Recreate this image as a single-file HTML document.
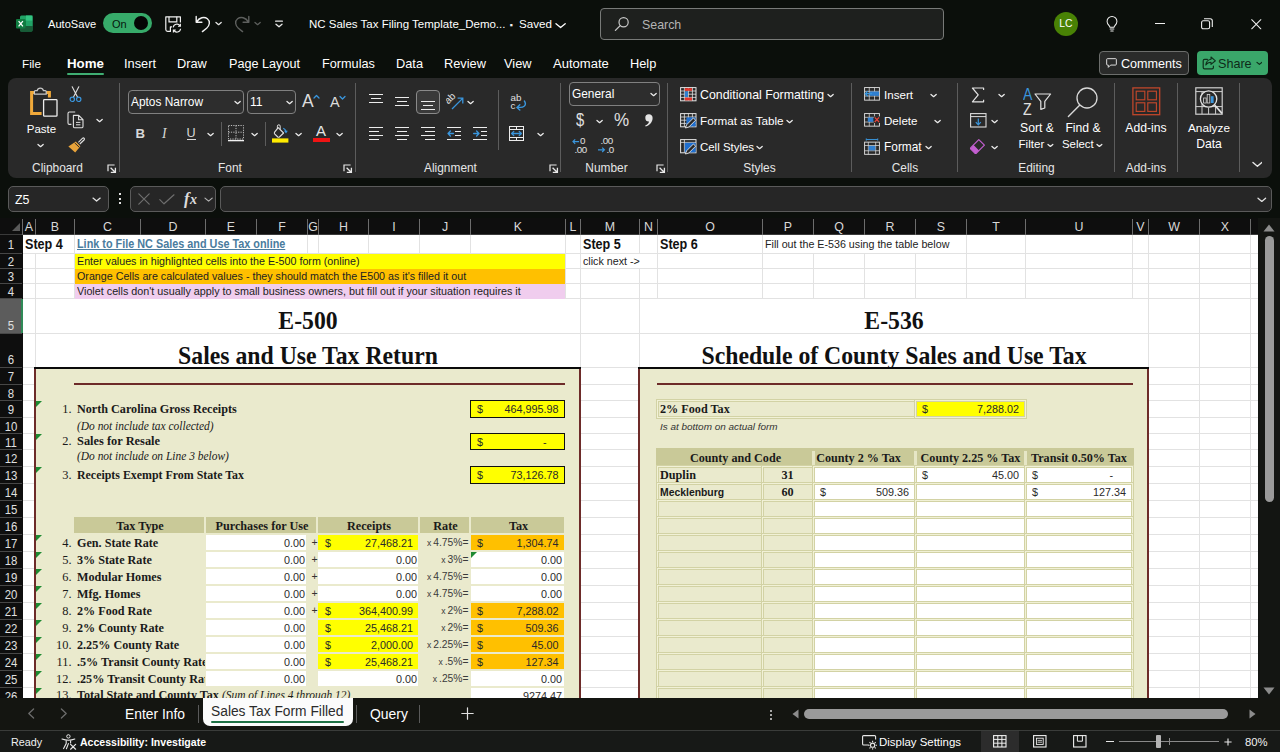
<!DOCTYPE html>
<html lang="en"><head><meta charset="utf-8"><title>NC Sales Tax Filing Template - Excel</title>
<style>
html,body{margin:0;padding:0;}
body{width:1280px;height:752px;overflow:hidden;background:#0b0f0b;position:relative;font-family:"Liberation Sans",sans-serif;}
body div,body svg{position:absolute;}
.t{white-space:nowrap;}
</style></head><body>
<svg style="position:absolute;left:16px;top:15px;" width="17" height="17" viewBox="0 0 17 17" fill="none">
<rect x="4" y="0.5" width="12.5" height="16" rx="1.5" fill="#21a366"/>
<rect x="10" y="0.5" width="6.5" height="5.3" fill="#33c481"/>
<rect x="4" y="5.8" width="6.2" height="5.3" fill="#107c41"/>
<rect x="10" y="5.8" width="6.5" height="5.3" fill="#21a366"/>
<rect x="4" y="11.1" width="12.5" height="5.4" rx="1" fill="#185c37"/>
<rect x="0" y="4" width="9.5" height="9.5" rx="1" fill="#107c41"/>
<path d="M2.6 6.2 L6.9 11.3 M6.9 6.2 L2.6 11.3" stroke="#fff" stroke-width="1.3"/>
</svg>
<div class="t" style="top:14.0px;line-height:20px;height:20px;font-size:11.1px;color:#fff;font-family:'Liberation Sans',sans-serif;left:48px;">AutoSave</div>
<div style="left:103px;top:13px;width:49px;height:20px;background:#37ab6a;border-radius:10px;"></div>
<div class="t" style="top:13.5px;line-height:20px;height:20px;font-size:11px;color:#06180d;font-family:'Liberation Sans',sans-serif;left:112px;">On</div>
<div style="left:134px;top:16px;width:14px;height:14px;background:#050505;border-radius:50%;"></div>
<svg style="position:absolute;left:165px;top:16px;" width="17" height="17" viewBox="0 0 17 17" fill="none">
<path d="M15.4 6.4 V0.8 H0.8 V13.6 Q0.8 15.4 2.6 15.4 H5.4 V10.8 H7" stroke="#f0f0f0" stroke-width="1.2" stroke-linejoin="round"/>
<path d="M4 0.8 V5.8 H11.8 V0.8" stroke="#f0f0f0" stroke-width="1.2"/>
<path d="M8.2 11.4 A3.7 3.7 0 0 1 15 9.8 M15.4 7.8 V10.2 H13 M15.6 12.8 A3.7 3.7 0 0 1 8.8 14.4 M8.4 16.4 V14 H10.8" stroke="#f0f0f0" stroke-width="1.15"/>
</svg>
<svg style="position:absolute;left:195px;top:15px;" width="17" height="18" viewBox="0 0 17 18" fill="none"><path d="M1.2 1.5 V7.2 H6.9 M1.6 6.9 C4.2 2.6 9.2 1.2 12.4 3.8 C15.6 6.4 14.6 10.6 11.6 13.2 L7.4 16.6" stroke="#f0f0f0" stroke-width="1.4" stroke-linecap="round" stroke-linejoin="round"/></svg>
<svg style="position:absolute;left:214.9px;top:21.4px;" width="7.2" height="5.2" viewBox="0 0 7.2 5.2" fill="none"><path d="M1 1.51 L3.6 3.69 L6.2 1.51" stroke="#e8e8e8" stroke-width="1.3" stroke-linecap="round" stroke-linejoin="round"/></svg>
<svg style="position:absolute;left:233px;top:15px;" width="17" height="18" viewBox="0 0 17 18" fill="none"><path d="M15.8 1.5 V7.2 H10.1 M15.4 6.9 C12.8 2.6 7.8 1.2 4.6 3.8 C1.4 6.4 2.4 10.6 5.4 13.2 L9.6 16.6" stroke="#5d5f5d" stroke-width="1.4" stroke-linecap="round" stroke-linejoin="round"/></svg>
<svg style="position:absolute;left:253.9px;top:21.4px;" width="7.2" height="5.2" viewBox="0 0 7.2 5.2" fill="none"><path d="M1 1.51 L3.6 3.69 L6.2 1.51" stroke="#5d5f5d" stroke-width="1.3" stroke-linecap="round" stroke-linejoin="round"/></svg>
<svg style="position:absolute;left:274px;top:19px;" width="10" height="10" viewBox="0 0 10 10" fill="none"><path d="M1.6 2.2 H8.4" stroke="#e8e8e8" stroke-width="1.2" stroke-linecap="round"/><path d="M2 5.2 L5 7.8 L8 5.2" stroke="#e8e8e8" stroke-width="1.3" stroke-linecap="round" stroke-linejoin="round"/></svg>
<div class="t" style="top:14.0px;line-height:20px;height:20px;font-size:11.5px;color:#fff;font-family:'Liberation Sans',sans-serif;left:309px;">NC Sales Tax Filing Template_Demo...</div>
<div class="t" style="top:15.0px;line-height:20px;height:20px;font-size:9px;color:#f0f0f0;font-family:'Liberation Sans',sans-serif;left:509.5px;font-family:'Liberation Sans','DejaVu Sans',sans-serif;">&#9642;</div>
<div class="t" style="top:14.0px;line-height:20px;height:20px;font-size:11.6px;color:#fff;font-family:'Liberation Sans',sans-serif;left:519px;">Saved</div>
<svg style="position:absolute;left:554.9px;top:20.9px;" width="11.2" height="9.2" viewBox="0 0 11.2 9.2" fill="none"><path d="M1 2.67 L5.6 6.53 L10.2 2.67" stroke="#fff" stroke-width="1.3" stroke-linecap="round" stroke-linejoin="round"/></svg>
<div style="left:600px;top:8px;width:344px;height:32px;background:#1e201e;border:1px solid #787a78;border-radius:4px;box-sizing:border-box;"></div>
<svg style="position:absolute;left:614px;top:16px;" width="16" height="16" viewBox="0 0 16 16" fill="none"><circle cx="9.6" cy="6.2" r="4.6" stroke="#c8c8c8" stroke-width="1.2"/><path d="M6.2 9.6 L1.4 14.4" stroke="#c8c8c8" stroke-width="1.3" stroke-linecap="round"/></svg>
<div class="t" style="top:14.5px;line-height:20px;height:20px;font-size:12.4px;color:#b4b4b4;font-family:'Liberation Sans',sans-serif;left:642px;">Search</div>
<div style="left:1054px;top:12px;width:24px;height:24px;background:#498205;border-radius:50%;"></div>
<div class="t" style="top:14.0px;line-height:20px;height:20px;font-size:10.4px;color:#fff;font-family:'Liberation Sans',sans-serif;left:1054.0px;width:24px;text-align:center;">LC</div>
<svg style="position:absolute;left:1106px;top:16px;" width="12" height="17" viewBox="0 0 14 20" fill="none"><path d="M4.6 13.2 C4.6 11.6 1.2 9.8 1.2 6.4 A5.8 5.8 0 0 1 12.8 6.4 C12.8 9.8 9.4 11.6 9.4 13.2 Z M4.8 15.4 H9.2 M5.6 17.6 H8.4" stroke="#f0f0f0" stroke-width="1.2" stroke-linejoin="round" stroke-linecap="round"/></svg>
<div style="left:1155px;top:23px;width:10px;height:1px;background:#f0f0f0;"></div>
<svg style="position:absolute;left:1201px;top:18px;" width="12" height="12" viewBox="0 0 12 12" fill="none"><rect x="0.6" y="2.8" width="8" height="8" rx="1.6" stroke="#f0f0f0" stroke-width="1.1"/><path d="M3 0.7 H9.2 Q11.3 0.7 11.3 2.8 V9" stroke="#f0f0f0" stroke-width="1.1"/></svg>
<svg style="position:absolute;left:1251px;top:19px;" width="10.5" height="10.5" viewBox="0 0 12 12" fill="none"><path d="M0.8 0.8 L11.2 11.2 M11.2 0.8 L0.8 11.2" stroke="#f0f0f0" stroke-width="1.2" stroke-linecap="round"/></svg>
<div class="t" style="top:54.0px;line-height:20px;height:20px;font-size:11.8px;color:#fff;font-family:'Liberation Sans',sans-serif;left:22px;">File</div>
<div class="t" style="top:54.0px;line-height:20px;height:20px;font-size:13.3px;color:#fff;font-family:'Liberation Sans',sans-serif;font-weight:700;left:67px;">Home</div>
<div class="t" style="top:54.0px;line-height:20px;height:20px;font-size:12.8px;color:#fff;font-family:'Liberation Sans',sans-serif;left:124px;">Insert</div>
<div class="t" style="top:54.0px;line-height:20px;height:20px;font-size:12.8px;color:#fff;font-family:'Liberation Sans',sans-serif;left:177px;">Draw</div>
<div class="t" style="top:54.0px;line-height:20px;height:20px;font-size:12.65px;color:#fff;font-family:'Liberation Sans',sans-serif;left:229px;">Page Layout</div>
<div class="t" style="top:54.0px;line-height:20px;height:20px;font-size:12.7px;color:#fff;font-family:'Liberation Sans',sans-serif;left:322px;">Formulas</div>
<div class="t" style="top:54.0px;line-height:20px;height:20px;font-size:12.8px;color:#fff;font-family:'Liberation Sans',sans-serif;left:396px;">Data</div>
<div class="t" style="top:54.0px;line-height:20px;height:20px;font-size:12.8px;color:#fff;font-family:'Liberation Sans',sans-serif;left:444px;">Review</div>
<div class="t" style="top:54.0px;line-height:20px;height:20px;font-size:12.8px;color:#fff;font-family:'Liberation Sans',sans-serif;left:504px;">View</div>
<div class="t" style="top:54.0px;line-height:20px;height:20px;font-size:13.05px;color:#fff;font-family:'Liberation Sans',sans-serif;left:553px;">Automate</div>
<div class="t" style="top:54.0px;line-height:20px;height:20px;font-size:12.8px;color:#fff;font-family:'Liberation Sans',sans-serif;left:630px;">Help</div>
<div style="left:67px;top:73px;width:37px;height:2px;background:#3fae72;border-radius:1px;"></div>
<div style="left:1099px;top:51px;width:90px;height:24px;background:#2a2b2a;border:1px solid #6c6e6c;border-radius:4px;box-sizing:border-box;"></div>
<svg style="position:absolute;left:1106px;top:58px;" width="11.5" height="10.7" viewBox="0 0 14 13" fill="none"><path d="M1.8 0.8 H11.6 Q12.6 0.8 12.6 1.8 V7.6 Q12.6 8.6 11.6 8.6 H5.6 L2.8 11.4 V8.6 H1.8 Q0.8 8.6 0.8 7.6 V1.8 Q0.8 0.8 1.8 0.8 Z" stroke="#f0f0f0" stroke-width="1.1" stroke-linejoin="round"/></svg>
<div class="t" style="top:53.5px;line-height:20px;height:20px;font-size:12.6px;color:#fff;font-family:'Liberation Sans',sans-serif;left:1121px;">Comments</div>
<div style="left:1197px;top:51px;width:71px;height:24px;background:#3aa76a;border-radius:4px;"></div>
<svg style="position:absolute;left:1202px;top:56px;" width="15" height="14" viewBox="0 0 15 14" fill="none"><path d="M5.4 3.4 H2.6 Q1.2 3.4 1.2 4.8 V11.4 Q1.2 12.8 2.6 12.8 H10 Q11.4 12.8 11.4 11.4 V10" stroke="#10301c" stroke-width="1.2" stroke-linecap="round"/><path d="M9 1 L13.4 4.8 L9 8.4 V6.2 C6.6 6.2 5 7 3.8 9 C4.2 5.6 6 3.6 9 3.2 Z" stroke="#10301c" stroke-width="1.1" stroke-linejoin="round"/></svg>
<div class="t" style="top:53.5px;line-height:20px;height:20px;font-size:12.6px;color:#0e2a19;font-family:'Liberation Sans',sans-serif;left:1218px;">Share</div>
<svg style="position:absolute;left:1255.6px;top:61.1px;" width="6.8" height="4.8" viewBox="0 0 6.8 4.8" fill="none"><path d="M1 1.39 L3.4 3.41 L5.8 1.39" stroke="#0e2a19" stroke-width="1.2" stroke-linecap="round" stroke-linejoin="round"/></svg>
<div style="left:8px;top:78px;width:1264px;height:100px;background:#292929;border-radius:8px;"></div>
<div style="left:119px;top:83px;width:1px;height:89px;background:#5c5c5c;"></div>
<div style="left:355px;top:83px;width:1px;height:89px;background:#5c5c5c;"></div>
<div style="left:560px;top:83px;width:1px;height:89px;background:#5c5c5c;"></div>
<div style="left:667px;top:83px;width:1px;height:89px;background:#5c5c5c;"></div>
<div style="left:851px;top:83px;width:1px;height:89px;background:#5c5c5c;"></div>
<div style="left:957px;top:83px;width:1px;height:89px;background:#5c5c5c;"></div>
<div style="left:1114px;top:83px;width:1px;height:89px;background:#5c5c5c;"></div>
<div style="left:1177px;top:83px;width:1px;height:89px;background:#5c5c5c;"></div>
<div style="left:1239px;top:83px;width:1px;height:89px;background:#5c5c5c;"></div>
<div class="t" style="top:158.0px;line-height:20px;height:20px;font-size:11.9px;color:#e6e6e6;font-family:'Liberation Sans',sans-serif;left:-2.5px;width:120px;text-align:center;">Clipboard</div>
<div class="t" style="top:158.0px;line-height:20px;height:20px;font-size:11.9px;color:#e6e6e6;font-family:'Liberation Sans',sans-serif;left:170.0px;width:120px;text-align:center;">Font</div>
<div class="t" style="top:158.0px;line-height:20px;height:20px;font-size:11.9px;color:#e6e6e6;font-family:'Liberation Sans',sans-serif;left:390.5px;width:120px;text-align:center;">Alignment</div>
<div class="t" style="top:158.0px;line-height:20px;height:20px;font-size:11.9px;color:#e6e6e6;font-family:'Liberation Sans',sans-serif;left:546.5px;width:120px;text-align:center;">Number</div>
<div class="t" style="top:158.0px;line-height:20px;height:20px;font-size:11.9px;color:#e6e6e6;font-family:'Liberation Sans',sans-serif;left:699.5px;width:120px;text-align:center;">Styles</div>
<div class="t" style="top:158.0px;line-height:20px;height:20px;font-size:11.9px;color:#e6e6e6;font-family:'Liberation Sans',sans-serif;left:845.0px;width:120px;text-align:center;">Cells</div>
<div class="t" style="top:158.0px;line-height:20px;height:20px;font-size:11.9px;color:#e6e6e6;font-family:'Liberation Sans',sans-serif;left:976.5px;width:120px;text-align:center;">Editing</div>
<div class="t" style="top:158.0px;line-height:20px;height:20px;font-size:11.9px;color:#e6e6e6;font-family:'Liberation Sans',sans-serif;left:1086.0px;width:120px;text-align:center;">Add-ins</div>
<svg style="position:absolute;left:107px;top:164px;" width="10" height="10" viewBox="0 0 10 10" fill="none"><path d="M1 7.2 V1 H7.6" stroke="#e8e8e8" stroke-width="1.2"/><path d="M3.6 3.8 L8.2 8.2 M8.4 3.8 V8.4 H3.8" stroke="#e8e8e8" stroke-width="1.3"/></svg>
<svg style="position:absolute;left:343px;top:164px;" width="10" height="10" viewBox="0 0 10 10" fill="none"><path d="M1 7.2 V1 H7.6" stroke="#e8e8e8" stroke-width="1.2"/><path d="M3.6 3.8 L8.2 8.2 M8.4 3.8 V8.4 H3.8" stroke="#e8e8e8" stroke-width="1.3"/></svg>
<svg style="position:absolute;left:549px;top:164px;" width="10" height="10" viewBox="0 0 10 10" fill="none"><path d="M1 7.2 V1 H7.6" stroke="#e8e8e8" stroke-width="1.2"/><path d="M3.6 3.8 L8.2 8.2 M8.4 3.8 V8.4 H3.8" stroke="#e8e8e8" stroke-width="1.3"/></svg>
<svg style="position:absolute;left:655.5px;top:164px;" width="10" height="10" viewBox="0 0 10 10" fill="none"><path d="M1 7.2 V1 H7.6" stroke="#e8e8e8" stroke-width="1.2"/><path d="M3.6 3.8 L8.2 8.2 M8.4 3.8 V8.4 H3.8" stroke="#e8e8e8" stroke-width="1.3"/></svg>
<svg style="position:absolute;left:1251.6px;top:160.1px;" width="10.8" height="8.8" viewBox="0 0 10.8 8.8" fill="none"><path d="M1 2.55 L5.4 6.25 L9.8 2.55" stroke="#e8e8e8" stroke-width="1.4" stroke-linecap="round" stroke-linejoin="round"/></svg>
<svg style="position:absolute;left:29px;top:86px;" width="30" height="32" viewBox="0 0 30 32" fill="none">
<path d="M12.6 27.6 H2.6 V6.6 H20.4 V11.6" stroke="#f0a93a" stroke-width="3" stroke-linejoin="miter"/>
<path d="M5.4 8.2 V5.6 Q5.4 4.6 6.4 4.6 H8.2 A3.2 3.2 0 0 1 14.4 4.6 H16.2 Q17.2 4.6 17.2 5.6 V8.2 Z" stroke="#c8c8c8" stroke-width="1.2" fill="#292929"/>
<rect x="14.6" y="13.6" width="13.4" height="16.6" rx="0.8" stroke="#eeeeee" stroke-width="1.3" fill="#292929"/>
</svg>
<div class="t" style="top:119.0px;line-height:20px;height:20px;font-size:11.5px;color:#fff;font-family:'Liberation Sans',sans-serif;left:11.5px;width:60px;text-align:center;">Paste</div>
<svg style="position:absolute;left:37.4px;top:142.9px;" width="7.2" height="5.2" viewBox="0 0 7.2 5.2" fill="none"><path d="M1 1.51 L3.6 3.69 L6.2 1.51" stroke="#ececec" stroke-width="1.3" stroke-linecap="round" stroke-linejoin="round"/></svg>
<svg style="position:absolute;left:69px;top:86px;" width="13" height="17" viewBox="0 0 13 17" fill="none">
<path d="M3.2 0.8 L8.6 11.2 M9.8 0.8 L4.4 11.2" stroke="#e0e0e0" stroke-width="1.1" stroke-linecap="round"/>
<circle cx="3.3" cy="13.3" r="2.2" stroke="#3a96dd" stroke-width="1.2"/><circle cx="9.7" cy="13.3" r="2.2" stroke="#3a96dd" stroke-width="1.2"/>
</svg>
<svg style="position:absolute;left:67px;top:111px;" width="18" height="18" viewBox="0 0 18 18" fill="none">
<path d="M4.4 13.4 H2.4 Q1 13.4 1 12 V2.4 Q1 1 2.4 1 H8.2" stroke="#e0e0e0" stroke-width="1.1"/>
<path d="M6.4 4.4 H11.8 L16 8.6 V15.4 Q16 16.8 14.6 16.8 H7.8 Q6.4 16.8 6.4 15.4 Z M11.6 4.6 V8.8 H15.8" stroke="#e0e0e0" stroke-width="1.1" stroke-linejoin="round"/>
<path d="M9 11.4 H13.4 M9 13.8 H13.4" stroke="#e0e0e0" stroke-width="1"/>
</svg>
<svg style="position:absolute;left:95.9px;top:118.4px;" width="7.2" height="5.2" viewBox="0 0 7.2 5.2" fill="none"><path d="M1 1.51 L3.6 3.69 L6.2 1.51" stroke="#ececec" stroke-width="1.3" stroke-linecap="round" stroke-linejoin="round"/></svg>
<svg style="position:absolute;left:67px;top:137px;" width="18" height="17" viewBox="0 0 18 17" fill="none">
<path d="M11.4 5.4 L15.6 1.2 Q16.6 0.6 17.2 1.4 Q17.8 2.2 17 3 L12.8 7" stroke="#e0e0e0" stroke-width="1.1"/>
<path d="M8.8 4.6 L13.4 9.2 L8.2 15.6 L1.4 9.4 Z" fill="#e8a33a"/>
<path d="M7.6 5.8 L12.4 10.4" stroke="#292929" stroke-width="1"/>
</svg>
<div style="left:128px;top:90px;width:116px;height:24px;background:#2d2d2d;border:1px solid #808080;border-radius:4px;box-sizing:border-box;"></div>
<div class="t" style="top:91.5px;line-height:20px;height:20px;font-size:11.9px;color:#fff;font-family:'Liberation Sans',sans-serif;left:131px;">Aptos Narrow</div>
<svg style="position:absolute;left:234.4px;top:99.9px;" width="7.2" height="5.2" viewBox="0 0 7.2 5.2" fill="none"><path d="M1 1.51 L3.6 3.69 L6.2 1.51" stroke="#ececec" stroke-width="1.3" stroke-linecap="round" stroke-linejoin="round"/></svg>
<div style="left:247px;top:90px;width:49px;height:24px;background:#2d2d2d;border:1px solid #808080;border-radius:4px;box-sizing:border-box;"></div>
<div class="t" style="top:91.5px;line-height:20px;height:20px;font-size:12.2px;color:#fff;font-family:'Liberation Sans',sans-serif;left:250px;">11</div>
<svg style="position:absolute;left:285.9px;top:99.9px;" width="7.2" height="5.2" viewBox="0 0 7.2 5.2" fill="none"><path d="M1 1.51 L3.6 3.69 L6.2 1.51" stroke="#ececec" stroke-width="1.3" stroke-linecap="round" stroke-linejoin="round"/></svg>
<div class="t" style="top:90.0px;line-height:22px;height:22px;font-size:17.5px;color:#dcdcdc;font-family:'Liberation Sans',sans-serif;left:302px;">A</div>
<svg style="position:absolute;left:312.5px;top:94px;" width="7" height="6" viewBox="0 0 7 6" fill="none"><path d="M1 4 L3.5 1.5 L6 4" stroke="#3a96dd" stroke-width="1.3" stroke-linecap="round" stroke-linejoin="round"/></svg>
<div class="t" style="top:92.0px;line-height:20px;height:20px;font-size:14.5px;color:#dcdcdc;font-family:'Liberation Sans',sans-serif;left:330px;">A</div>
<svg style="position:absolute;left:338.5px;top:94.5px;" width="7" height="6" viewBox="0 0 7 6" fill="none"><path d="M1 1.5 L3.5 4 L6 1.5" stroke="#3a96dd" stroke-width="1.3" stroke-linecap="round" stroke-linejoin="round"/></svg>
<div class="t" style="top:123.5px;line-height:20px;height:20px;font-size:13.2px;color:#d8d8d8;font-family:'Liberation Sans',sans-serif;font-weight:700;left:135.5px;">B</div>
<div class="t" style="top:123.5px;line-height:20px;height:20px;font-size:13.6px;color:#d8d8d8;font-family:'Liberation Serif',serif;left:162px;font-style:italic;">I</div>
<div class="t" style="top:122.5px;line-height:20px;height:20px;font-size:12.6px;color:#d8d8d8;font-family:'Liberation Sans',sans-serif;left:186.5px;">U</div>
<div style="left:187px;top:139px;width:9px;height:1px;background:#d8d8d8;"></div>
<svg style="position:absolute;left:206.9px;top:131.9px;" width="7.2" height="5.2" viewBox="0 0 7.2 5.2" fill="none"><path d="M1 1.51 L3.6 3.69 L6.2 1.51" stroke="#ececec" stroke-width="1.3" stroke-linecap="round" stroke-linejoin="round"/></svg>
<div style="left:221px;top:122px;width:1px;height:24px;background:#5c5c5c;"></div>
<svg style="position:absolute;left:228px;top:125px;" width="16" height="17" viewBox="0 0 16 17" fill="none">
<path d="M0.5 0.5 H15.5 V14 H0.5 Z M8 0.5 V14 M0.5 7.2 H15.5" stroke="#bdbdbd" stroke-width="1" stroke-dasharray="1.2 1.2"/>
<path d="M0 15.6 H16" stroke="#f0f0f0" stroke-width="1.4"/>
</svg>
<svg style="position:absolute;left:250.9px;top:131.9px;" width="7.2" height="5.2" viewBox="0 0 7.2 5.2" fill="none"><path d="M1 1.51 L3.6 3.69 L6.2 1.51" stroke="#ececec" stroke-width="1.3" stroke-linecap="round" stroke-linejoin="round"/></svg>
<div style="left:265px;top:122px;width:1px;height:24px;background:#5c5c5c;"></div>
<svg style="position:absolute;left:272px;top:124px;" width="17" height="19" viewBox="0 0 17 19" fill="none">
<path d="M6.2 3.6 L11.6 9 L7.4 13 Q6.6 13.6 5.8 13 L2.6 9.8 Q2 9 2.6 8.2 Z" stroke="#e0e0e0" stroke-width="1.1" stroke-linejoin="round"/>
<path d="M5.4 5 V2.2 Q5.4 0.8 6.8 0.8 Q8.2 0.8 8.2 2.2 V5.4" stroke="#e0e0e0" stroke-width="1"/>
<path d="M11.2 4.2 Q13.6 5 14 8.4 M12.6 6.6 L14 8.6 L15.2 6.6" stroke="#3a96dd" stroke-width="1.1" fill="none"/>
<rect x="0" y="14.4" width="16.4" height="4.2" fill="#ffeb00"/>
</svg>
<svg style="position:absolute;left:294.9px;top:131.9px;" width="7.2" height="5.2" viewBox="0 0 7.2 5.2" fill="none"><path d="M1 1.51 L3.6 3.69 L6.2 1.51" stroke="#ececec" stroke-width="1.3" stroke-linecap="round" stroke-linejoin="round"/></svg>
<div class="t" style="top:121.0px;line-height:20px;height:20px;font-size:15px;color:#e6e6e6;font-family:'Liberation Sans',sans-serif;left:311.0px;width:20px;text-align:center;">A</div>
<div style="left:313px;top:138px;width:17px;height:4px;background:#f01414;"></div>
<svg style="position:absolute;left:335.9px;top:131.9px;" width="7.2" height="5.2" viewBox="0 0 7.2 5.2" fill="none"><path d="M1 1.51 L3.6 3.69 L6.2 1.51" stroke="#ececec" stroke-width="1.3" stroke-linecap="round" stroke-linejoin="round"/></svg>
<div style="left:369px;top:94px;width:14px;height:1px;background:#ececec;"></div>
<div style="left:371px;top:98px;width:10px;height:1px;background:#ececec;"></div>
<div style="left:369px;top:102px;width:14px;height:1px;background:#ececec;"></div>
<div style="left:395px;top:97px;width:14px;height:1px;background:#ececec;"></div>
<div style="left:397px;top:101px;width:10px;height:1px;background:#ececec;"></div>
<div style="left:395px;top:105px;width:14px;height:1px;background:#ececec;"></div>
<div style="left:416px;top:90px;width:24px;height:24px;background:#3a3a3a;border:1px solid #8a8a8a;border-radius:4px;box-sizing:border-box;"></div>
<div style="left:421px;top:101px;width:14px;height:1px;background:#ececec;"></div>
<div style="left:423px;top:105px;width:10px;height:1px;background:#ececec;"></div>
<div style="left:421px;top:109px;width:14px;height:1px;background:#ececec;"></div>
<svg style="position:absolute;left:446px;top:92px;" width="18" height="18" viewBox="0 0 18 18" fill="none">
<text x="-0.5" y="10" font-family="Liberation Sans" font-size="10" fill="#e0e0e0" transform="rotate(-45 4 8)">ab</text>
<path d="M6 17 L16.4 6.6 M11.6 6.2 H16.8 V11.4" stroke="#3a96dd" stroke-width="1.3"/>
</svg>
<svg style="position:absolute;left:466.9px;top:99.9px;" width="7.2" height="5.2" viewBox="0 0 7.2 5.2" fill="none"><path d="M1 1.51 L3.6 3.69 L6.2 1.51" stroke="#ececec" stroke-width="1.3" stroke-linecap="round" stroke-linejoin="round"/></svg>
<div style="left:369px;top:127px;width:14px;height:1px;background:#ececec;"></div>
<div style="left:369px;top:131px;width:10px;height:1px;background:#ececec;"></div>
<div style="left:369px;top:135px;width:14px;height:1px;background:#ececec;"></div>
<div style="left:369px;top:139px;width:10px;height:1px;background:#ececec;"></div>
<div style="left:395px;top:127px;width:14px;height:1px;background:#ececec;"></div>
<div style="left:397px;top:131px;width:10px;height:1px;background:#ececec;"></div>
<div style="left:395px;top:135px;width:14px;height:1px;background:#ececec;"></div>
<div style="left:397px;top:139px;width:10px;height:1px;background:#ececec;"></div>
<div style="left:421px;top:127px;width:14px;height:1px;background:#ececec;"></div>
<div style="left:425px;top:131px;width:10px;height:1px;background:#ececec;"></div>
<div style="left:421px;top:135px;width:14px;height:1px;background:#ececec;"></div>
<div style="left:425px;top:139px;width:10px;height:1px;background:#ececec;"></div>
<div style="left:447px;top:127px;width:14px;height:1px;background:#ececec;"></div>
<div style="left:455px;top:131px;width:6px;height:1px;background:#ececec;"></div>
<div style="left:455px;top:135px;width:6px;height:1px;background:#ececec;"></div>
<div style="left:447px;top:139px;width:14px;height:1px;background:#ececec;"></div>
<svg style="position:absolute;left:447px;top:129px;" width="8" height="9" viewBox="0 0 8 9" fill="none"><path d="M6.4 4.5 H1 M3.4 2 L1 4.5 L3.4 7" stroke="#3a96dd" stroke-width="1.3" stroke-linecap="round" stroke-linejoin="round"/></svg>
<div style="left:473px;top:127px;width:14px;height:1px;background:#ececec;"></div>
<div style="left:481px;top:131px;width:6px;height:1px;background:#ececec;"></div>
<div style="left:481px;top:135px;width:6px;height:1px;background:#ececec;"></div>
<div style="left:473px;top:139px;width:14px;height:1px;background:#ececec;"></div>
<svg style="position:absolute;left:473px;top:129px;" width="8" height="9" viewBox="0 0 8 9" fill="none"><path d="M0.6 4.5 H6 M3.6 2 L6 4.5 L3.6 7" stroke="#3a96dd" stroke-width="1.3" stroke-linecap="round" stroke-linejoin="round"/></svg>
<div style="left:498px;top:90px;width:1px;height:60px;background:#5c5c5c;"></div>
<div class="t" style="top:87.5px;line-height:20px;height:20px;font-size:9.8px;color:#e0e0e0;font-family:'Liberation Sans',sans-serif;left:510.5px;">ab</div>
<div class="t" style="top:95.5px;line-height:20px;height:20px;font-size:9.8px;color:#e0e0e0;font-family:'Liberation Sans',sans-serif;left:510.5px;">c</div>
<svg style="position:absolute;left:515px;top:100px;" width="12" height="12" viewBox="0 0 12 12" fill="none"><path d="M9.4 1 Q11.4 4 9.4 6 Q7.6 7.6 4.6 7.4 H2.2 M4.8 4.8 L2 7.4 L4.8 10" stroke="#3a96dd" stroke-width="1.4" fill="none" stroke-linecap="round"/></svg>
<svg style="position:absolute;left:509px;top:125px;" width="16" height="17" viewBox="0 0 16 17" fill="none">
<rect x="0.5" y="1.5" width="14" height="14" stroke="#ececec" stroke-width="1"/>
<path d="M0.5 4.5 H14.5 M0.5 12.5 H14.5 M7.5 1.5 V4.5 M7.5 12.5 V15.5" stroke="#ececec" stroke-width="1"/>
<path d="M2.8 8.5 H12.2 M4.8 6.4 L2.6 8.5 L4.8 10.6 M10.2 6.4 L12.4 8.5 L10.2 10.6" stroke="#3a96dd" stroke-width="1.3" stroke-linecap="round" stroke-linejoin="round"/>
</svg>
<svg style="position:absolute;left:536.9px;top:131.9px;" width="7.2" height="5.2" viewBox="0 0 7.2 5.2" fill="none"><path d="M1 1.51 L3.6 3.69 L6.2 1.51" stroke="#ececec" stroke-width="1.3" stroke-linecap="round" stroke-linejoin="round"/></svg>
<div style="left:569px;top:82px;width:91px;height:24px;background:#2d2d2d;border:1px solid #808080;border-radius:4px;box-sizing:border-box;"></div>
<div class="t" style="top:84.0px;line-height:20px;height:20px;font-size:11.9px;color:#fff;font-family:'Liberation Sans',sans-serif;left:572px;">General</div>
<svg style="position:absolute;left:649.9px;top:92.4px;" width="7.2" height="5.2" viewBox="0 0 7.2 5.2" fill="none"><path d="M1 1.51 L3.6 3.69 L6.2 1.51" stroke="#ececec" stroke-width="1.3" stroke-linecap="round" stroke-linejoin="round"/></svg>
<div class="t" style="top:108.0px;line-height:24px;height:24px;font-size:18px;color:#e0e0e0;font-family:'Liberation Sans',sans-serif;left:576px;transform:scaleX(.82);transform-origin:left;">$</div>
<svg style="position:absolute;left:595.9px;top:118.9px;" width="7.2" height="5.2" viewBox="0 0 7.2 5.2" fill="none"><path d="M1 1.51 L3.6 3.69 L6.2 1.51" stroke="#ececec" stroke-width="1.3" stroke-linecap="round" stroke-linejoin="round"/></svg>
<div class="t" style="top:108.0px;line-height:24px;height:24px;font-size:18.5px;color:#e0e0e0;font-family:'Liberation Sans',sans-serif;left:614px;transform:scaleX(.92);transform-origin:left;">%</div>
<svg style="position:absolute;left:643px;top:113px;" width="12" height="15" viewBox="0 0 12 15" fill="none"><path d="M5.8 1.2 A3.6 3.6 0 0 1 9.6 5 C9.6 9 7 12 2.6 13.6 L2.2 12.6 C4.6 11.4 5.8 10 6 8.4 A3.6 3.6 0 0 1 5.8 1.2 Z" fill="#e4e4e4"/></svg>
<svg style="position:absolute;left:572px;top:137px;" width="18" height="18" viewBox="0 0 18 18" fill="none">
<text x="8" y="7.4" font-family="Liberation Sans" font-size="9.8" letter-spacing="-0.4" fill="#e0e0e0">0</text>
<text x="2.5" y="15.6" font-family="Liberation Sans" font-size="9.8" letter-spacing="-0.4" fill="#e0e0e0">.00</text>
<path d="M7 4.6 H1 M3.2 2.4 L1 4.6 L3.2 6.8" stroke="#3a96dd" stroke-width="1.2"/></svg>
<svg style="position:absolute;left:597px;top:137px;" width="18" height="18" viewBox="0 0 18 18" fill="none">
<text x="3.5" y="7.4" font-family="Liberation Sans" font-size="9.8" letter-spacing="-0.4" fill="#e0e0e0">.00</text>
<text x="9.5" y="15.6" font-family="Liberation Sans" font-size="9.8" letter-spacing="-0.4" fill="#e0e0e0">.0</text>
<path d="M1 12.8 H7.4 M5.2 10.6 L7.4 12.8 L5.2 15" stroke="#3a96dd" stroke-width="1.2"/></svg>
<svg style="position:absolute;left:680px;top:87px;" width="17" height="15" viewBox="0 0 17 15" fill="none">
<rect x="0.6" y="0.6" width="15.4" height="13.2" stroke="#e4e4e4" stroke-width="1"/>
<path d="M0.6 4 H16 M0.6 7.2 H16 M0.6 10.4 H16 M4.4 0.6 V13.8 M8.4 0.6 V13.8 M12.4 0.6 V13.8" stroke="#e4e4e4" stroke-width="0.8"/>
<rect x="4.8" y="1.2" width="7.2" height="2.6" fill="#e8342a"/>
<rect x="4.8" y="4.4" width="3.2" height="5.6" fill="#2f7fd0"/>
<rect x="4.8" y="10.6" width="7.2" height="2.8" fill="#e8342a"/>
</svg>
<svg style="position:absolute;left:680px;top:112.5px;" width="17" height="16" viewBox="0 0 17 16" fill="none">
<rect x="0.6" y="0.6" width="15.4" height="13.2" stroke="#e4e4e4" stroke-width="1"/>
<path d="M0.6 4 H16 M0.6 7.2 H16 M0.6 10.4 H16 M8.4 0.6 V13.8 M12.4 0.6 V13.8 M4.4 0.6 V13.8" stroke="#e4e4e4" stroke-width="0.8"/>
<rect x="6.4" y="4.4" width="9.2" height="9" fill="#1f6fd0"/>
<path d="M5.4 15 L6.6 11.8 L13.4 5 L15.6 7.2 L8.8 14 Z" fill="#292929" stroke="#e8e8e8" stroke-width="0.9"/>
</svg>
<svg style="position:absolute;left:680px;top:139px;" width="17" height="16" viewBox="0 0 17 16" fill="none">
<rect x="0.6" y="0.6" width="15.4" height="13.2" stroke="#e4e4e4" stroke-width="1"/>
<path d="M0.6 3.4 H16  M4.4 0.6 V13.8" stroke="#e4e4e4" stroke-width="0.8"/>
<rect x="4.8" y="3.8" width="10.8" height="9.6" fill="#1f6fd0"/>
<path d="M5.4 15 L6.6 11.8 L13.4 5 L15.6 7.2 L8.8 14 Z" fill="#292929" stroke="#e8e8e8" stroke-width="0.9"/>
</svg>
<div class="t" style="top:84.5px;line-height:20px;height:20px;font-size:12.35px;color:#fff;font-family:'Liberation Sans',sans-serif;left:700px;">Conditional Formatting</div>
<svg style="position:absolute;left:827.4px;top:93.4px;" width="7.2" height="5.2" viewBox="0 0 7.2 5.2" fill="none"><path d="M1 1.51 L3.6 3.69 L6.2 1.51" stroke="#ececec" stroke-width="1.3" stroke-linecap="round" stroke-linejoin="round"/></svg>
<div class="t" style="top:110.5px;line-height:20px;height:20px;font-size:11.7px;color:#fff;font-family:'Liberation Sans',sans-serif;left:700px;">Format as Table</div>
<svg style="position:absolute;left:785.9px;top:119.4px;" width="7.2" height="5.2" viewBox="0 0 7.2 5.2" fill="none"><path d="M1 1.51 L3.6 3.69 L6.2 1.51" stroke="#ececec" stroke-width="1.3" stroke-linecap="round" stroke-linejoin="round"/></svg>
<div class="t" style="top:136.5px;line-height:20px;height:20px;font-size:11.45px;color:#fff;font-family:'Liberation Sans',sans-serif;left:700px;">Cell Styles</div>
<svg style="position:absolute;left:755.9px;top:145.4px;" width="7.2" height="5.2" viewBox="0 0 7.2 5.2" fill="none"><path d="M1 1.51 L3.6 3.69 L6.2 1.51" stroke="#ececec" stroke-width="1.3" stroke-linecap="round" stroke-linejoin="round"/></svg>
<svg style="position:absolute;left:864px;top:87px;" width="16" height="14.1" viewBox="0 0 17 15" fill="none">
<rect x="0.6" y="0.6" width="15.8" height="13.4" stroke="#dcdcdc" stroke-width="1"/>
<path d="M0.6 4.6 H16.4 M0.6 9.6 H16.4 M5.6 0.6 V14 M11.2 0.6 V14" stroke="#dcdcdc" stroke-width="0.8"/>
<rect x="6" y="4.8" width="10" height="4.6" fill="#2f7fd0"/>
<path d="M8.6 7.1 H1.4 M4 4.4 L1.4 7.1 L4 9.8" stroke="#3a96dd" stroke-width="1.4"/>
</svg>
<svg style="position:absolute;left:864px;top:113px;" width="16" height="14.1" viewBox="0 0 17 15" fill="none">
<rect x="0.6" y="0.6" width="15.8" height="13.4" stroke="#dcdcdc" stroke-width="1"/>
<path d="M0.6 4.6 H16.4 M0.6 9.6 H16.4 M5.6 0.6 V14 M11.2 0.6 V14" stroke="#dcdcdc" stroke-width="0.8"/>
<rect x="4" y="4.8" width="6" height="4.6" fill="#2f7fd0"/>
<rect x="10.4" y="3.6" width="6.6" height="7" fill="#292929"/>
<path d="M11.4 4.6 L16 9.6 M16 4.6 L11.4 9.6" stroke="#e8443a" stroke-width="1.3"/>
</svg>
<svg style="position:absolute;left:864px;top:138px;" width="16" height="16.9" viewBox="0 0 17 18" fill="none">
<path d="M2.4 1.6 H14.6 M2.4 0.4 V2.8 M14.6 0.4 V2.8" stroke="#3a96dd" stroke-width="1"/>
<rect x="0.6" y="4.4" width="15.8" height="13" stroke="#dcdcdc" stroke-width="1"/>
<path d="M0.6 8 H16.4 M0.6 13.6 H16.4 M4.6 4.4 V17.4 M12.4 4.4 V17.4" stroke="#dcdcdc" stroke-width="0.8"/>
<rect x="5" y="8.4" width="7" height="4.8" fill="#2f7fd0"/>
</svg>
<div class="t" style="top:84.5px;line-height:20px;height:20px;font-size:11.6px;color:#fff;font-family:'Liberation Sans',sans-serif;left:884px;">Insert</div>
<svg style="position:absolute;left:929.9px;top:92.9px;" width="7.2" height="5.2" viewBox="0 0 7.2 5.2" fill="none"><path d="M1 1.51 L3.6 3.69 L6.2 1.51" stroke="#ececec" stroke-width="1.3" stroke-linecap="round" stroke-linejoin="round"/></svg>
<div class="t" style="top:110.5px;line-height:20px;height:20px;font-size:11.6px;color:#fff;font-family:'Liberation Sans',sans-serif;left:884px;">Delete</div>
<svg style="position:absolute;left:933.9px;top:119.4px;" width="7.2" height="5.2" viewBox="0 0 7.2 5.2" fill="none"><path d="M1 1.51 L3.6 3.69 L6.2 1.51" stroke="#ececec" stroke-width="1.3" stroke-linecap="round" stroke-linejoin="round"/></svg>
<div class="t" style="top:136.5px;line-height:20px;height:20px;font-size:11.9px;color:#fff;font-family:'Liberation Sans',sans-serif;left:884px;">Format</div>
<svg style="position:absolute;left:925.4px;top:145.4px;" width="7.2" height="5.2" viewBox="0 0 7.2 5.2" fill="none"><path d="M1 1.51 L3.6 3.69 L6.2 1.51" stroke="#ececec" stroke-width="1.3" stroke-linecap="round" stroke-linejoin="round"/></svg>
<svg style="position:absolute;left:971px;top:87px;" width="14" height="16" viewBox="0 0 14 16" fill="none"><path d="M12.6 3 V1 H1.4 L7.2 7.8 L1.4 14.8 H12.6 V12.8" stroke="#e4e4e4" stroke-width="1.2" stroke-linejoin="round"/></svg>
<svg style="position:absolute;left:997.9px;top:92.9px;" width="7.2" height="5.2" viewBox="0 0 7.2 5.2" fill="none"><path d="M1 1.51 L3.6 3.69 L6.2 1.51" stroke="#ececec" stroke-width="1.3" stroke-linecap="round" stroke-linejoin="round"/></svg>
<svg style="position:absolute;left:970px;top:113px;" width="17" height="15" viewBox="0 0 17 15" fill="none"><rect x="0.6" y="0.6" width="15.4" height="13.4" stroke="#dcdcdc" stroke-width="1.1"/><path d="M0.6 3.6 H16" stroke="#dcdcdc" stroke-width="1"/><path d="M8.3 5.4 V11.6 M5.8 9.2 L8.3 11.8 L10.8 9.2" stroke="#3a96dd" stroke-width="1.2"/></svg>
<svg style="position:absolute;left:990.9px;top:119.4px;" width="7.2" height="5.2" viewBox="0 0 7.2 5.2" fill="none"><path d="M1 1.51 L3.6 3.69 L6.2 1.51" stroke="#ececec" stroke-width="1.3" stroke-linecap="round" stroke-linejoin="round"/></svg>
<svg style="position:absolute;left:969px;top:138px;" width="17" height="17" viewBox="0 0 17 17" fill="none"><path d="M9.8 1.6 L15.4 7.2 L7.4 15.2 Q6.6 15.8 5.8 15.2 L1.8 11.2 Q1.2 10.4 1.8 9.6 Z" stroke="#c35fd0" stroke-width="1.2" stroke-linejoin="round"/><path d="M4.6 7 L10 12.6 L7.2 15.2 Q6.6 15.6 6 15.2 L2 11.2 Q1.4 10.4 2 9.8 Z" fill="#c35fd0"/></svg>
<svg style="position:absolute;left:990.9px;top:145.4px;" width="7.2" height="5.2" viewBox="0 0 7.2 5.2" fill="none"><path d="M1 1.51 L3.6 3.69 L6.2 1.51" stroke="#ececec" stroke-width="1.3" stroke-linecap="round" stroke-linejoin="round"/></svg>
<div class="t" style="top:84.5px;line-height:20px;height:20px;font-size:16px;color:#3a96dd;font-family:'Liberation Sans',sans-serif;left:1022.5px;transform:scaleX(.88);transform-origin:left center;">A</div>
<div class="t" style="top:99.5px;line-height:20px;height:20px;font-size:16px;color:#e0e0e0;font-family:'Liberation Sans',sans-serif;left:1022.5px;transform:scaleX(.88);transform-origin:left center;">Z</div>
<svg style="position:absolute;left:1034px;top:93px;" width="18" height="18" viewBox="0 0 18 18" fill="none"><path d="M1 1 H16.6 L10.8 8.4 V15 L6.8 16.4 V8.4 Z" stroke="#e4e4e4" stroke-width="1.2" stroke-linejoin="round"/></svg>
<div class="t" style="top:118.0px;line-height:20px;height:20px;font-size:12.2px;color:#fff;font-family:'Liberation Sans',sans-serif;left:997.0px;width:80px;text-align:center;">Sort &amp;</div>
<div class="t" style="top:134.0px;line-height:20px;height:20px;font-size:11.6px;color:#fff;font-family:'Liberation Sans',sans-serif;left:1018.5px;">Filter</div>
<svg style="position:absolute;left:1047.1px;top:143.1px;" width="6.8" height="4.8" viewBox="0 0 6.8 4.8" fill="none"><path d="M1 1.39 L3.4 3.41 L5.8 1.39" stroke="#ececec" stroke-width="1.3" stroke-linecap="round" stroke-linejoin="round"/></svg>
<svg style="position:absolute;left:1067px;top:86px;" width="32" height="32" viewBox="0 0 32 32" fill="none"><circle cx="20" cy="12" r="10" stroke="#d8d8d8" stroke-width="1.3"/><path d="M12.6 19.2 L1.4 30.4" stroke="#d8d8d8" stroke-width="1.4" stroke-linecap="round"/></svg>
<div class="t" style="top:118.0px;line-height:20px;height:20px;font-size:12.2px;color:#fff;font-family:'Liberation Sans',sans-serif;left:1043.0px;width:80px;text-align:center;">Find &amp;</div>
<div class="t" style="top:134.0px;line-height:20px;height:20px;font-size:11.4px;color:#fff;font-family:'Liberation Sans',sans-serif;left:1062px;">Select</div>
<svg style="position:absolute;left:1096.1px;top:143.1px;" width="6.8" height="4.8" viewBox="0 0 6.8 4.8" fill="none"><path d="M1 1.39 L3.4 3.41 L5.8 1.39" stroke="#ececec" stroke-width="1.3" stroke-linecap="round" stroke-linejoin="round"/></svg>
<svg style="position:absolute;left:1132px;top:87px;" width="29" height="29" viewBox="0 0 29 29" fill="none">
<rect x="0.9" y="0.9" width="26.8" height="26.8" stroke="#c0472b" stroke-width="1.3"/>
<rect x="4.2" y="4.2" width="8.6" height="8.6" stroke="#c0472b" stroke-width="1.15"/><rect x="15.8" y="4.2" width="8.6" height="8.6" stroke="#c0472b" stroke-width="1.15"/>
<rect x="4.2" y="15.8" width="8.6" height="8.6" stroke="#c0472b" stroke-width="1.15"/><rect x="15.8" y="15.8" width="8.6" height="8.6" stroke="#c0472b" stroke-width="1.15"/>
</svg>
<div class="t" style="top:118.0px;line-height:20px;height:20px;font-size:12.2px;color:#fff;font-family:'Liberation Sans',sans-serif;left:1106.0px;width:80px;text-align:center;">Add-ins</div>
<svg style="position:absolute;left:1195px;top:87px;" width="29" height="29" viewBox="0 0 29 29" fill="none">
<rect x="0.8" y="0.8" width="26.4" height="26.4" stroke="#cfcfcf" stroke-width="1.2"/>
<path d="M0.8 4.6 H27.2 M0.8 19.6 H27.2 M7 4.6 V27.2 M20.6 19.6 V27.2 M13.6 21 V27.2" stroke="#cfcfcf" stroke-width="1"/>
<circle cx="13.6" cy="12" r="8.2" fill="#292929" stroke="#e4e4e4" stroke-width="1.3"/>
<rect x="8.6" y="11" width="2.6" height="5" stroke="#d8d8d8" stroke-width="0.8"/><rect x="12.2" y="7.4" width="2.6" height="8.6" stroke="#d8d8d8" stroke-width="0.8"/><rect x="15.8" y="9.2" width="2.8" height="6.8" fill="#3a96dd"/>
<path d="M19.6 18 L27 26.4" stroke="#e4e4e4" stroke-width="1.6"/>
</svg>
<div class="t" style="top:118.0px;line-height:20px;height:20px;font-size:11.8px;color:#fff;font-family:'Liberation Sans',sans-serif;left:1169.0px;width:80px;text-align:center;">Analyze</div>
<div class="t" style="top:134.0px;line-height:20px;height:20px;font-size:12.2px;color:#fff;font-family:'Liberation Sans',sans-serif;left:1169.0px;width:80px;text-align:center;">Data</div>
<div style="left:8px;top:186px;width:101px;height:26px;background:#262626;border:1px solid #5a5a5a;border-radius:5px;box-sizing:border-box;"></div>
<div class="t" style="top:189.5px;line-height:20px;height:20px;font-size:12.4px;color:#fff;font-family:'Liberation Sans',sans-serif;left:15px;">Z5</div>
<svg style="position:absolute;left:91.9px;top:196.4px;" width="9.2" height="7.2" viewBox="0 0 9.2 7.2" fill="none"><path d="M1 2.09 L4.6 5.11 L8.2 2.09" stroke="#e0e0e0" stroke-width="1.3" stroke-linecap="round" stroke-linejoin="round"/></svg>
<div style="left:119px;top:193px;width:2px;height:2px;background:#e0e0e0;"></div>
<div style="left:119px;top:198px;width:2px;height:2px;background:#e0e0e0;"></div>
<div style="left:119px;top:202px;width:2px;height:2px;background:#e0e0e0;"></div>
<div style="left:130px;top:186px;width:86px;height:26px;background:#262626;border:1px solid #5a5a5a;border-radius:5px;box-sizing:border-box;"></div>
<svg style="position:absolute;left:138px;top:193px;" width="12" height="12" viewBox="0 0 12 12" fill="none"><path d="M0.8 0.8 L11.2 11.2 M11.2 0.8 L0.8 11.2" stroke="#6e6e6e" stroke-width="1.2" stroke-linecap="round"/></svg>
<svg style="position:absolute;left:159px;top:194px;" width="16" height="11" viewBox="0 0 16 11" fill="none"><path d="M0.8 5.6 L5 9.8 L15 0.8" stroke="#6e6e6e" stroke-width="1.2" stroke-linecap="round" stroke-linejoin="round"/></svg>
<div class="t" style="top:186.5px;line-height:24px;height:24px;font-size:16.5px;color:#dcdcdc;font-family:'Liberation Serif',serif;font-weight:600;left:184px;font-style:italic;">f</div>
<div class="t" style="top:190.0px;line-height:20px;height:20px;font-size:14px;color:#dcdcdc;font-family:'Liberation Serif',serif;font-weight:600;left:190px;font-style:italic;">x</div>
<svg style="position:absolute;left:203.9px;top:196.4px;" width="9.2" height="7.2" viewBox="0 0 9.2 7.2" fill="none"><path d="M1 2.09 L4.6 5.11 L8.2 2.09" stroke="#b4b4b4" stroke-width="1.2" stroke-linecap="round" stroke-linejoin="round"/></svg>
<div style="left:220px;top:186px;width:1052px;height:26px;background:#262626;border:1px solid #5a5a5a;border-radius:5px;box-sizing:border-box;"></div>
<svg style="position:absolute;left:1257.2px;top:196.2px;" width="9.6" height="7.6" viewBox="0 0 9.6 7.6" fill="none"><path d="M1 2.20 L4.8 5.40 L8.6 2.20" stroke="#e0e0e0" stroke-width="1.3" stroke-linecap="round" stroke-linejoin="round"/></svg>
<div style="left:0;top:218px;width:1258px;height:480px;overflow:hidden;background:#fff;">
<div style="left:23px;top:16px;width:1235px;height:1px;background:#e2e2e2;"></div>
<div style="left:23px;top:35px;width:1235px;height:1px;background:#e2e2e2;"></div>
<div style="left:23px;top:50px;width:1235px;height:1px;background:#e2e2e2;"></div>
<div style="left:23px;top:65px;width:1235px;height:1px;background:#e2e2e2;"></div>
<div style="left:23px;top:80px;width:1235px;height:1px;background:#e2e2e2;"></div>
<div style="left:23px;top:115px;width:1235px;height:1px;background:#e2e2e2;"></div>
<div style="left:23px;top:149px;width:1235px;height:1px;background:#e2e2e2;"></div>
<div style="left:23px;top:166px;width:1235px;height:1px;background:#e2e2e2;"></div>
<div style="left:23px;top:182px;width:1235px;height:1px;background:#e2e2e2;"></div>
<div style="left:23px;top:199px;width:1235px;height:1px;background:#e2e2e2;"></div>
<div style="left:23px;top:215px;width:1235px;height:1px;background:#e2e2e2;"></div>
<div style="left:23px;top:231px;width:1235px;height:1px;background:#e2e2e2;"></div>
<div style="left:23px;top:248px;width:1235px;height:1px;background:#e2e2e2;"></div>
<div style="left:23px;top:265px;width:1235px;height:1px;background:#e2e2e2;"></div>
<div style="left:23px;top:282px;width:1235px;height:1px;background:#e2e2e2;"></div>
<div style="left:23px;top:299px;width:1235px;height:1px;background:#e2e2e2;"></div>
<div style="left:23px;top:316px;width:1235px;height:1px;background:#e2e2e2;"></div>
<div style="left:23px;top:333px;width:1235px;height:1px;background:#e2e2e2;"></div>
<div style="left:23px;top:350px;width:1235px;height:1px;background:#e2e2e2;"></div>
<div style="left:23px;top:367px;width:1235px;height:1px;background:#e2e2e2;"></div>
<div style="left:23px;top:384px;width:1235px;height:1px;background:#e2e2e2;"></div>
<div style="left:23px;top:401px;width:1235px;height:1px;background:#e2e2e2;"></div>
<div style="left:23px;top:418px;width:1235px;height:1px;background:#e2e2e2;"></div>
<div style="left:23px;top:435px;width:1235px;height:1px;background:#e2e2e2;"></div>
<div style="left:23px;top:452px;width:1235px;height:1px;background:#e2e2e2;"></div>
<div style="left:23px;top:469px;width:1235px;height:1px;background:#e2e2e2;"></div>
<div style="left:35px;top:17px;width:1px;height:463px;background:#e2e2e2;"></div>
<div style="left:74px;top:17px;width:1px;height:463px;background:#e2e2e2;"></div>
<div style="left:140px;top:17px;width:1px;height:463px;background:#e2e2e2;"></div>
<div style="left:205px;top:17px;width:1px;height:463px;background:#e2e2e2;"></div>
<div style="left:256px;top:17px;width:1px;height:463px;background:#e2e2e2;"></div>
<div style="left:307px;top:17px;width:1px;height:463px;background:#e2e2e2;"></div>
<div style="left:318px;top:17px;width:1px;height:463px;background:#e2e2e2;"></div>
<div style="left:368px;top:17px;width:1px;height:463px;background:#e2e2e2;"></div>
<div style="left:419px;top:17px;width:1px;height:463px;background:#e2e2e2;"></div>
<div style="left:470px;top:17px;width:1px;height:463px;background:#e2e2e2;"></div>
<div style="left:565px;top:17px;width:1px;height:463px;background:#e2e2e2;"></div>
<div style="left:580px;top:17px;width:1px;height:463px;background:#e2e2e2;"></div>
<div style="left:639px;top:17px;width:1px;height:463px;background:#e2e2e2;"></div>
<div style="left:657px;top:17px;width:1px;height:463px;background:#e2e2e2;"></div>
<div style="left:762px;top:17px;width:1px;height:463px;background:#e2e2e2;"></div>
<div style="left:813px;top:17px;width:1px;height:463px;background:#e2e2e2;"></div>
<div style="left:864px;top:17px;width:1px;height:463px;background:#e2e2e2;"></div>
<div style="left:915px;top:17px;width:1px;height:463px;background:#e2e2e2;"></div>
<div style="left:966px;top:17px;width:1px;height:463px;background:#e2e2e2;"></div>
<div style="left:1025px;top:17px;width:1px;height:463px;background:#e2e2e2;"></div>
<div style="left:1132px;top:17px;width:1px;height:463px;background:#e2e2e2;"></div>
<div style="left:1148px;top:17px;width:1px;height:463px;background:#e2e2e2;"></div>
<div style="left:1199px;top:17px;width:1px;height:463px;background:#e2e2e2;"></div>
<div style="left:1250px;top:17px;width:1px;height:463px;background:#e2e2e2;"></div>
<div style="left:75px;top:17px;width:231px;height:18px;background:#fff;"></div>
<div style="left:763px;top:17px;width:203px;height:18px;background:#fff;"></div>
<div style="left:639px;top:36px;width:1px;height:14px;background:#fff;"></div>
<div style="left:35px;top:17px;width:1px;height:18px;background:#fff;"></div>
<div style="left:36px;top:81px;width:544px;height:34px;background:#fff;"></div>
<div style="left:36px;top:116px;width:544px;height:33px;background:#fff;"></div>
<div style="left:640px;top:81px;width:508px;height:34px;background:#fff;"></div>
<div style="left:640px;top:116px;width:508px;height:33px;background:#fff;"></div>
<div class="t" style="top:16.0px;line-height:20px;height:20px;font-size:14px;color:#111;font-family:'Liberation Sans',sans-serif;font-weight:700;left:25px;transform:scaleX(.9);transform-origin:left center;">Step 4</div>
<div class="t" style="top:16.0px;line-height:20px;height:20px;font-size:11.9px;color:#4a7c9e;font-family:'Liberation Sans',sans-serif;font-weight:700;left:77px;text-decoration:underline;transform:scaleX(.912);transform-origin:left center;">Link to File NC Sales and Use Tax online</div>
<div class="t" style="top:16.0px;line-height:20px;height:20px;font-size:14px;color:#111;font-family:'Liberation Sans',sans-serif;font-weight:700;left:583px;transform:scaleX(.9);transform-origin:left center;">Step 5</div>
<div class="t" style="top:16.0px;line-height:20px;height:20px;font-size:14px;color:#111;font-family:'Liberation Sans',sans-serif;font-weight:700;left:660px;transform:scaleX(.9);transform-origin:left center;">Step 6</div>
<div class="t" style="top:16.0px;line-height:20px;height:20px;font-size:11.3px;color:#222;font-family:'Liberation Sans',sans-serif;left:765px;transform:scaleX(.947);transform-origin:left center;">Fill out the E-536 using the table below</div>
<div style="left:75px;top:36px;width:490px;height:15px;background:#ffff00;"></div>
<div style="left:75px;top:51px;width:490px;height:15px;background:#ffc000;"></div>
<div style="left:75px;top:66px;width:490px;height:15px;background:#f0cdee;"></div>
<div class="t" style="top:33.0px;line-height:20px;height:20px;font-size:11.3px;color:#222;font-family:'Liberation Sans',sans-serif;left:77px;transform:scaleX(.947);transform-origin:left center;">Enter values in highlighted cells into the E-500 form (online)</div>
<div class="t" style="top:48.0px;line-height:20px;height:20px;font-size:11.3px;color:#222;font-family:'Liberation Sans',sans-serif;left:77px;transform:scaleX(.947);transform-origin:left center;">Orange Cells are calculated values - they should match the E500 as it's filled it out</div>
<div class="t" style="top:63.0px;line-height:20px;height:20px;font-size:11.38px;color:#222;font-family:'Liberation Sans',sans-serif;left:77px;transform:scaleX(.947);transform-origin:left center;">Violet cells don't usually apply to small business owners, but fill out if your situation requires it</div>
<div class="t" style="top:33.0px;line-height:20px;height:20px;font-size:11.3px;color:#222;font-family:'Liberation Sans',sans-serif;left:583px;transform:scaleX(.947);transform-origin:left center;">click next -&gt;</div>
<div class="t" style="top:86.5px;line-height:32px;height:32px;font-size:24.6px;color:#111;font-family:'Liberation Serif',serif;font-weight:700;left:108.0px;width:400px;text-align:center;transform:scaleX(.965);">E-500</div>
<div class="t" style="top:121.5px;line-height:32px;height:32px;font-size:24.6px;color:#111;font-family:'Liberation Serif',serif;font-weight:700;left:58.0px;width:500px;text-align:center;transform:scaleX(.965);">Sales and Use Tax Return</div>
<div class="t" style="top:86.5px;line-height:32px;height:32px;font-size:24.6px;color:#111;font-family:'Liberation Serif',serif;font-weight:700;left:694.0px;width:400px;text-align:center;transform:scaleX(.965);">E-536</div>
<div class="t" style="top:121.5px;line-height:32px;height:32px;font-size:24.6px;color:#111;font-family:'Liberation Serif',serif;font-weight:700;left:594.0px;width:600px;text-align:center;transform:scaleX(.965);">Schedule of County Sales and Use Tax</div>
<div style="left:34px;top:149px;width:547px;height:340px;background:#eaeacd;"></div>
<div style="left:34px;top:149px;width:2px;height:340px;background:#6d2b29;"></div>
<div style="left:579px;top:149px;width:2px;height:340px;background:#6d2b29;"></div>
<div style="left:34px;top:149px;width:547px;height:2px;background:#0a0a0a;"></div>
<div style="left:74px;top:165px;width:491px;height:2px;background:#6d2b29;"></div>
<svg style="position:absolute;left:36px;top:183px;" width="6" height="6" viewBox="0 0 6 6" fill="none"><path d="M0 0 H6 L0 6 Z" fill="#1e8a32"/></svg>
<svg style="position:absolute;left:36px;top:216px;" width="6" height="6" viewBox="0 0 6 6" fill="none"><path d="M0 0 H6 L0 6 Z" fill="#1e8a32"/></svg>
<svg style="position:absolute;left:36px;top:249px;" width="6" height="6" viewBox="0 0 6 6" fill="none"><path d="M0 0 H6 L0 6 Z" fill="#1e8a32"/></svg>
<svg style="position:absolute;left:36px;top:317px;" width="6" height="6" viewBox="0 0 6 6" fill="none"><path d="M0 0 H6 L0 6 Z" fill="#1e8a32"/></svg>
<svg style="position:absolute;left:36px;top:334px;" width="6" height="6" viewBox="0 0 6 6" fill="none"><path d="M0 0 H6 L0 6 Z" fill="#1e8a32"/></svg>
<svg style="position:absolute;left:36px;top:351px;" width="6" height="6" viewBox="0 0 6 6" fill="none"><path d="M0 0 H6 L0 6 Z" fill="#1e8a32"/></svg>
<svg style="position:absolute;left:36px;top:368px;" width="6" height="6" viewBox="0 0 6 6" fill="none"><path d="M0 0 H6 L0 6 Z" fill="#1e8a32"/></svg>
<svg style="position:absolute;left:36px;top:385px;" width="6" height="6" viewBox="0 0 6 6" fill="none"><path d="M0 0 H6 L0 6 Z" fill="#1e8a32"/></svg>
<svg style="position:absolute;left:36px;top:402px;" width="6" height="6" viewBox="0 0 6 6" fill="none"><path d="M0 0 H6 L0 6 Z" fill="#1e8a32"/></svg>
<svg style="position:absolute;left:36px;top:419px;" width="6" height="6" viewBox="0 0 6 6" fill="none"><path d="M0 0 H6 L0 6 Z" fill="#1e8a32"/></svg>
<svg style="position:absolute;left:36px;top:436px;" width="6" height="6" viewBox="0 0 6 6" fill="none"><path d="M0 0 H6 L0 6 Z" fill="#1e8a32"/></svg>
<svg style="position:absolute;left:36px;top:453px;" width="6" height="6" viewBox="0 0 6 6" fill="none"><path d="M0 0 H6 L0 6 Z" fill="#1e8a32"/></svg>
<svg style="position:absolute;left:36px;top:470px;" width="6" height="6" viewBox="0 0 6 6" fill="none"><path d="M0 0 H6 L0 6 Z" fill="#1e8a32"/></svg>
<div class="t" style="top:181.0px;line-height:20px;height:20px;font-size:12.4px;color:#1a1a1a;font-family:'Liberation Serif',serif;left:31.5px;width:40px;text-align:right;">1.</div>
<div class="t" style="top:181.0px;line-height:20px;height:20px;font-size:12.15px;color:#1a1a1a;font-family:'Liberation Serif',serif;font-weight:700;left:77px;">North Carolina Gross Receipts</div>
<div class="t" style="top:197.5px;line-height:20px;height:20px;font-size:11.45px;color:#1a1a1a;font-family:'Liberation Serif',serif;left:77px;font-style:italic;">(Do not include tax collected)</div>
<div class="t" style="top:212.5px;line-height:20px;height:20px;font-size:12.4px;color:#1a1a1a;font-family:'Liberation Serif',serif;left:31.5px;width:40px;text-align:right;">2.</div>
<div class="t" style="top:212.5px;line-height:20px;height:20px;font-size:12.4px;color:#1a1a1a;font-family:'Liberation Serif',serif;font-weight:700;left:77px;">Sales for Resale</div>
<div class="t" style="top:228.0px;line-height:20px;height:20px;font-size:11.45px;color:#1a1a1a;font-family:'Liberation Serif',serif;left:77px;font-style:italic;">(Do not include on Line 3 below)</div>
<div class="t" style="top:247.0px;line-height:20px;height:20px;font-size:12.4px;color:#1a1a1a;font-family:'Liberation Serif',serif;left:31.5px;width:40px;text-align:right;">3.</div>
<div class="t" style="top:247.0px;line-height:20px;height:20px;font-size:11.9px;color:#1a1a1a;font-family:'Liberation Serif',serif;font-weight:700;left:77px;">Receipts Exempt From State Tax</div>
<div style="left:470px;top:182px;width:95px;height:18px;background:#ffff00;border:1px solid #111;box-sizing:border-box;"></div>
<div class="t" style="top:181.0px;line-height:20px;height:20px;font-size:10.8px;color:#2a2a2a;font-family:'Liberation Sans',sans-serif;left:477px;">$</div>
<div class="t" style="top:181.0px;line-height:20px;height:20px;font-size:10.8px;color:#2a2a2a;font-family:'Liberation Sans',sans-serif;left:478.5px;width:80px;text-align:right;">464,995.98</div>
<div style="left:470px;top:215px;width:95px;height:17px;background:#ffff00;border:1px solid #111;box-sizing:border-box;"></div>
<div class="t" style="top:213.5px;line-height:20px;height:20px;font-size:10.8px;color:#2a2a2a;font-family:'Liberation Sans',sans-serif;left:477px;">$</div>
<div class="t" style="top:213.5px;line-height:20px;height:20px;font-size:10.8px;color:#2a2a2a;font-family:'Liberation Sans',sans-serif;left:478.5px;width:80px;text-align:right;">-&nbsp;&nbsp;&nbsp;&nbsp;</div>
<div style="left:470px;top:248px;width:95px;height:18px;background:#ffff00;border:1px solid #111;box-sizing:border-box;"></div>
<div class="t" style="top:247.0px;line-height:20px;height:20px;font-size:10.8px;color:#2a2a2a;font-family:'Liberation Sans',sans-serif;left:477px;">$</div>
<div class="t" style="top:247.0px;line-height:20px;height:20px;font-size:10.8px;color:#2a2a2a;font-family:'Liberation Sans',sans-serif;left:478.5px;width:80px;text-align:right;">73,126.78</div>
<div style="left:74px;top:299px;width:130px;height:16px;background:#c9c998;"></div>
<div class="t" style="top:297.5px;line-height:20px;height:20px;font-size:12.2px;color:#1a1a1a;font-family:'Liberation Serif',serif;font-weight:700;left:60.0px;width:160px;text-align:center;">Tax Type</div>
<div style="left:206px;top:299px;width:110px;height:16px;background:#c9c998;"></div>
<div class="t" style="top:297.5px;line-height:20px;height:20px;font-size:12.2px;color:#1a1a1a;font-family:'Liberation Serif',serif;font-weight:700;left:182.0px;width:160px;text-align:center;">Purchases for Use</div>
<div style="left:318px;top:299px;width:100px;height:16px;background:#c9c998;"></div>
<div class="t" style="top:297.5px;line-height:20px;height:20px;font-size:12.2px;color:#1a1a1a;font-family:'Liberation Serif',serif;font-weight:700;left:289.0px;width:160px;text-align:center;">Receipts</div>
<div style="left:420px;top:299px;width:49px;height:16px;background:#c9c998;"></div>
<div class="t" style="top:297.5px;line-height:20px;height:20px;font-size:12.2px;color:#1a1a1a;font-family:'Liberation Serif',serif;font-weight:700;left:365.5px;width:160px;text-align:center;">Rate</div>
<div style="left:471px;top:299px;width:93px;height:16px;background:#c9c998;"></div>
<div class="t" style="top:297.5px;line-height:20px;height:20px;font-size:12.2px;color:#1a1a1a;font-family:'Liberation Serif',serif;font-weight:700;left:438.5px;width:160px;text-align:center;">Tax</div>
<div class="t" style="top:314.5px;line-height:20px;height:20px;font-size:12.4px;color:#1a1a1a;font-family:'Liberation Serif',serif;left:31.5px;width:40px;text-align:right;">4.</div>
<div class="t" style="top:314.5px;line-height:20px;height:20px;font-size:12.15px;color:#1a1a1a;font-family:'Liberation Serif',serif;font-weight:700;left:77px;width:128px;overflow:hidden;">Gen. State Rate</div>
<div style="left:206px;top:317px;width:100px;height:15px;background:#fff;"></div>
<div class="t" style="top:314.5px;line-height:20px;height:20px;font-size:10.8px;color:#2a2a2a;font-family:'Liberation Sans',sans-serif;left:245px;width:60px;text-align:right;">0.00</div>
<div class="t" style="top:314.0px;line-height:20px;height:20px;font-size:10.5px;color:#333;font-family:'Liberation Sans',sans-serif;left:311.5px;">+</div>
<div style="left:318px;top:317px;width:100px;height:15px;background:#ffff00;"></div>
<div class="t" style="top:314.5px;line-height:20px;height:20px;font-size:10.8px;color:#2a2a2a;font-family:'Liberation Sans',sans-serif;left:325px;">$</div>
<div class="t" style="top:314.5px;line-height:20px;height:20px;font-size:10.8px;color:#2a2a2a;font-family:'Liberation Sans',sans-serif;left:333px;width:80px;text-align:right;">27,468.21</div>
<div class="t" style="top:315.0px;line-height:20px;height:20px;font-size:10.3px;color:#3a3a3a;font-family:'Liberation Sans',sans-serif;left:408.5px;width:60px;text-align:right;"><span style="font-size:8.6px">x</span>&#8201;4.75%=</div>
<div style="left:471px;top:317px;width:93px;height:15px;background:#ffc000;"></div>
<div class="t" style="top:314.5px;line-height:20px;height:20px;font-size:10.8px;color:#2a2a2a;font-family:'Liberation Sans',sans-serif;left:477px;">$</div>
<div class="t" style="top:314.5px;line-height:20px;height:20px;font-size:10.8px;color:#2a2a2a;font-family:'Liberation Sans',sans-serif;left:478.5px;width:80px;text-align:right;">1,304.74</div>
<div class="t" style="top:331.5px;line-height:20px;height:20px;font-size:12.4px;color:#1a1a1a;font-family:'Liberation Serif',serif;left:31.5px;width:40px;text-align:right;">5.</div>
<div class="t" style="top:331.5px;line-height:20px;height:20px;font-size:12.15px;color:#1a1a1a;font-family:'Liberation Serif',serif;font-weight:700;left:77px;width:128px;overflow:hidden;">3% State Rate</div>
<div style="left:206px;top:334px;width:100px;height:15px;background:#fff;"></div>
<div class="t" style="top:331.5px;line-height:20px;height:20px;font-size:10.8px;color:#2a2a2a;font-family:'Liberation Sans',sans-serif;left:245px;width:60px;text-align:right;">0.00</div>
<div class="t" style="top:331.0px;line-height:20px;height:20px;font-size:10.5px;color:#333;font-family:'Liberation Sans',sans-serif;left:311.5px;">+</div>
<div style="left:318px;top:334px;width:100px;height:15px;background:#fff;"></div>
<div class="t" style="top:331.5px;line-height:20px;height:20px;font-size:10.8px;color:#2a2a2a;font-family:'Liberation Sans',sans-serif;left:337px;width:80px;text-align:right;">0.00</div>
<div class="t" style="top:332.0px;line-height:20px;height:20px;font-size:10.3px;color:#3a3a3a;font-family:'Liberation Sans',sans-serif;left:408.5px;width:60px;text-align:right;"><span style="font-size:8.6px">x</span>&#8201;3%=</div>
<div style="left:471px;top:334px;width:93px;height:15px;background:#fff;"></div>
<div class="t" style="top:331.5px;line-height:20px;height:20px;font-size:10.8px;color:#2a2a2a;font-family:'Liberation Sans',sans-serif;left:482px;width:80px;text-align:right;">0.00</div>
<div class="t" style="top:348.5px;line-height:20px;height:20px;font-size:12.4px;color:#1a1a1a;font-family:'Liberation Serif',serif;left:31.5px;width:40px;text-align:right;">6.</div>
<div class="t" style="top:348.5px;line-height:20px;height:20px;font-size:12.15px;color:#1a1a1a;font-family:'Liberation Serif',serif;font-weight:700;left:77px;width:128px;overflow:hidden;">Modular Homes</div>
<div style="left:206px;top:351px;width:100px;height:15px;background:#fff;"></div>
<div class="t" style="top:348.5px;line-height:20px;height:20px;font-size:10.8px;color:#2a2a2a;font-family:'Liberation Sans',sans-serif;left:245px;width:60px;text-align:right;">0.00</div>
<div class="t" style="top:348.0px;line-height:20px;height:20px;font-size:10.5px;color:#333;font-family:'Liberation Sans',sans-serif;left:311.5px;">+</div>
<div style="left:318px;top:351px;width:100px;height:15px;background:#fff;"></div>
<div class="t" style="top:348.5px;line-height:20px;height:20px;font-size:10.8px;color:#2a2a2a;font-family:'Liberation Sans',sans-serif;left:337px;width:80px;text-align:right;">0.00</div>
<div class="t" style="top:349.0px;line-height:20px;height:20px;font-size:10.3px;color:#3a3a3a;font-family:'Liberation Sans',sans-serif;left:408.5px;width:60px;text-align:right;"><span style="font-size:8.6px">x</span>&#8201;4.75%=</div>
<div style="left:471px;top:351px;width:93px;height:15px;background:#fff;"></div>
<div class="t" style="top:348.5px;line-height:20px;height:20px;font-size:10.8px;color:#2a2a2a;font-family:'Liberation Sans',sans-serif;left:482px;width:80px;text-align:right;">0.00</div>
<div class="t" style="top:365.5px;line-height:20px;height:20px;font-size:12.4px;color:#1a1a1a;font-family:'Liberation Serif',serif;left:31.5px;width:40px;text-align:right;">7.</div>
<div class="t" style="top:365.5px;line-height:20px;height:20px;font-size:12.15px;color:#1a1a1a;font-family:'Liberation Serif',serif;font-weight:700;left:77px;width:128px;overflow:hidden;">Mfg. Homes</div>
<div style="left:206px;top:368px;width:100px;height:15px;background:#fff;"></div>
<div class="t" style="top:365.5px;line-height:20px;height:20px;font-size:10.8px;color:#2a2a2a;font-family:'Liberation Sans',sans-serif;left:245px;width:60px;text-align:right;">0.00</div>
<div class="t" style="top:365.0px;line-height:20px;height:20px;font-size:10.5px;color:#333;font-family:'Liberation Sans',sans-serif;left:311.5px;">+</div>
<div style="left:318px;top:368px;width:100px;height:15px;background:#fff;"></div>
<div class="t" style="top:365.5px;line-height:20px;height:20px;font-size:10.8px;color:#2a2a2a;font-family:'Liberation Sans',sans-serif;left:337px;width:80px;text-align:right;">0.00</div>
<div class="t" style="top:366.0px;line-height:20px;height:20px;font-size:10.3px;color:#3a3a3a;font-family:'Liberation Sans',sans-serif;left:408.5px;width:60px;text-align:right;"><span style="font-size:8.6px">x</span>&#8201;4.75%=</div>
<div style="left:471px;top:368px;width:93px;height:15px;background:#fff;"></div>
<div class="t" style="top:365.5px;line-height:20px;height:20px;font-size:10.8px;color:#2a2a2a;font-family:'Liberation Sans',sans-serif;left:482px;width:80px;text-align:right;">0.00</div>
<div class="t" style="top:382.5px;line-height:20px;height:20px;font-size:12.4px;color:#1a1a1a;font-family:'Liberation Serif',serif;left:31.5px;width:40px;text-align:right;">8.</div>
<div class="t" style="top:382.5px;line-height:20px;height:20px;font-size:12.15px;color:#1a1a1a;font-family:'Liberation Serif',serif;font-weight:700;left:77px;width:128px;overflow:hidden;">2% Food Rate</div>
<div style="left:206px;top:385px;width:100px;height:15px;background:#fff;"></div>
<div class="t" style="top:382.5px;line-height:20px;height:20px;font-size:10.8px;color:#2a2a2a;font-family:'Liberation Sans',sans-serif;left:245px;width:60px;text-align:right;">0.00</div>
<div class="t" style="top:382.0px;line-height:20px;height:20px;font-size:10.5px;color:#333;font-family:'Liberation Sans',sans-serif;left:311.5px;">+</div>
<div style="left:318px;top:385px;width:100px;height:15px;background:#ffff00;"></div>
<div class="t" style="top:382.5px;line-height:20px;height:20px;font-size:10.8px;color:#2a2a2a;font-family:'Liberation Sans',sans-serif;left:325px;">$</div>
<div class="t" style="top:382.5px;line-height:20px;height:20px;font-size:10.8px;color:#2a2a2a;font-family:'Liberation Sans',sans-serif;left:333px;width:80px;text-align:right;">364,400.99</div>
<div class="t" style="top:383.0px;line-height:20px;height:20px;font-size:10.3px;color:#3a3a3a;font-family:'Liberation Sans',sans-serif;left:408.5px;width:60px;text-align:right;"><span style="font-size:8.6px">x</span>&#8201;2%=</div>
<div style="left:471px;top:385px;width:93px;height:15px;background:#ffc000;"></div>
<div class="t" style="top:382.5px;line-height:20px;height:20px;font-size:10.8px;color:#2a2a2a;font-family:'Liberation Sans',sans-serif;left:477px;">$</div>
<div class="t" style="top:382.5px;line-height:20px;height:20px;font-size:10.8px;color:#2a2a2a;font-family:'Liberation Sans',sans-serif;left:478.5px;width:80px;text-align:right;">7,288.02</div>
<div class="t" style="top:399.5px;line-height:20px;height:20px;font-size:12.4px;color:#1a1a1a;font-family:'Liberation Serif',serif;left:31.5px;width:40px;text-align:right;">9.</div>
<div class="t" style="top:399.5px;line-height:20px;height:20px;font-size:12.15px;color:#1a1a1a;font-family:'Liberation Serif',serif;font-weight:700;left:77px;width:128px;overflow:hidden;">2% County Rate</div>
<div style="left:206px;top:402px;width:100px;height:15px;background:#fff;"></div>
<div class="t" style="top:399.5px;line-height:20px;height:20px;font-size:10.8px;color:#2a2a2a;font-family:'Liberation Sans',sans-serif;left:245px;width:60px;text-align:right;">0.00</div>
<div style="left:318px;top:402px;width:100px;height:15px;background:#ffff00;"></div>
<div class="t" style="top:399.5px;line-height:20px;height:20px;font-size:10.8px;color:#2a2a2a;font-family:'Liberation Sans',sans-serif;left:325px;">$</div>
<div class="t" style="top:399.5px;line-height:20px;height:20px;font-size:10.8px;color:#2a2a2a;font-family:'Liberation Sans',sans-serif;left:333px;width:80px;text-align:right;">25,468.21</div>
<div class="t" style="top:400.0px;line-height:20px;height:20px;font-size:10.3px;color:#3a3a3a;font-family:'Liberation Sans',sans-serif;left:408.5px;width:60px;text-align:right;"><span style="font-size:8.6px">x</span>&#8201;2%=</div>
<div style="left:471px;top:402px;width:93px;height:15px;background:#ffc000;"></div>
<div class="t" style="top:399.5px;line-height:20px;height:20px;font-size:10.8px;color:#2a2a2a;font-family:'Liberation Sans',sans-serif;left:477px;">$</div>
<div class="t" style="top:399.5px;line-height:20px;height:20px;font-size:10.8px;color:#2a2a2a;font-family:'Liberation Sans',sans-serif;left:478.5px;width:80px;text-align:right;">509.36</div>
<div class="t" style="top:416.5px;line-height:20px;height:20px;font-size:12.4px;color:#1a1a1a;font-family:'Liberation Serif',serif;left:31.5px;width:40px;text-align:right;">10.</div>
<div class="t" style="top:416.5px;line-height:20px;height:20px;font-size:12.15px;color:#1a1a1a;font-family:'Liberation Serif',serif;font-weight:700;left:77px;width:128px;overflow:hidden;">2.25% County Rate</div>
<div style="left:206px;top:419px;width:100px;height:15px;background:#fff;"></div>
<div class="t" style="top:416.5px;line-height:20px;height:20px;font-size:10.8px;color:#2a2a2a;font-family:'Liberation Sans',sans-serif;left:245px;width:60px;text-align:right;">0.00</div>
<div style="left:318px;top:419px;width:100px;height:15px;background:#ffff00;"></div>
<div class="t" style="top:416.5px;line-height:20px;height:20px;font-size:10.8px;color:#2a2a2a;font-family:'Liberation Sans',sans-serif;left:325px;">$</div>
<div class="t" style="top:416.5px;line-height:20px;height:20px;font-size:10.8px;color:#2a2a2a;font-family:'Liberation Sans',sans-serif;left:333px;width:80px;text-align:right;">2,000.00</div>
<div class="t" style="top:417.0px;line-height:20px;height:20px;font-size:10.3px;color:#3a3a3a;font-family:'Liberation Sans',sans-serif;left:408.5px;width:60px;text-align:right;"><span style="font-size:8.6px">x</span>&#8201;2.25%=</div>
<div style="left:471px;top:419px;width:93px;height:15px;background:#ffc000;"></div>
<div class="t" style="top:416.5px;line-height:20px;height:20px;font-size:10.8px;color:#2a2a2a;font-family:'Liberation Sans',sans-serif;left:477px;">$</div>
<div class="t" style="top:416.5px;line-height:20px;height:20px;font-size:10.8px;color:#2a2a2a;font-family:'Liberation Sans',sans-serif;left:478.5px;width:80px;text-align:right;">45.00</div>
<div class="t" style="top:433.5px;line-height:20px;height:20px;font-size:12.4px;color:#1a1a1a;font-family:'Liberation Serif',serif;left:31.5px;width:40px;text-align:right;">11.</div>
<div class="t" style="top:433.5px;line-height:20px;height:20px;font-size:12.15px;color:#1a1a1a;font-family:'Liberation Serif',serif;font-weight:700;left:77px;width:128px;overflow:hidden;">.5% Transit County Rate</div>
<div style="left:206px;top:436px;width:100px;height:15px;background:#fff;"></div>
<div class="t" style="top:433.5px;line-height:20px;height:20px;font-size:10.8px;color:#2a2a2a;font-family:'Liberation Sans',sans-serif;left:245px;width:60px;text-align:right;">0.00</div>
<div style="left:318px;top:436px;width:100px;height:15px;background:#ffff00;"></div>
<div class="t" style="top:433.5px;line-height:20px;height:20px;font-size:10.8px;color:#2a2a2a;font-family:'Liberation Sans',sans-serif;left:325px;">$</div>
<div class="t" style="top:433.5px;line-height:20px;height:20px;font-size:10.8px;color:#2a2a2a;font-family:'Liberation Sans',sans-serif;left:333px;width:80px;text-align:right;">25,468.21</div>
<div class="t" style="top:434.0px;line-height:20px;height:20px;font-size:10.3px;color:#3a3a3a;font-family:'Liberation Sans',sans-serif;left:408.5px;width:60px;text-align:right;"><span style="font-size:8.6px">x</span>&#8201;.5%=</div>
<div style="left:471px;top:436px;width:93px;height:15px;background:#ffc000;"></div>
<div class="t" style="top:433.5px;line-height:20px;height:20px;font-size:10.8px;color:#2a2a2a;font-family:'Liberation Sans',sans-serif;left:477px;">$</div>
<div class="t" style="top:433.5px;line-height:20px;height:20px;font-size:10.8px;color:#2a2a2a;font-family:'Liberation Sans',sans-serif;left:478.5px;width:80px;text-align:right;">127.34</div>
<div class="t" style="top:450.5px;line-height:20px;height:20px;font-size:12.4px;color:#1a1a1a;font-family:'Liberation Serif',serif;left:31.5px;width:40px;text-align:right;">12.</div>
<div class="t" style="top:450.5px;line-height:20px;height:20px;font-size:12.15px;color:#1a1a1a;font-family:'Liberation Serif',serif;font-weight:700;left:77px;width:128px;overflow:hidden;">.25% Transit County Rate</div>
<div style="left:206px;top:453px;width:100px;height:15px;background:#fff;"></div>
<div class="t" style="top:450.5px;line-height:20px;height:20px;font-size:10.8px;color:#2a2a2a;font-family:'Liberation Sans',sans-serif;left:245px;width:60px;text-align:right;">0.00</div>
<div style="left:318px;top:453px;width:100px;height:15px;background:#fff;"></div>
<div class="t" style="top:450.5px;line-height:20px;height:20px;font-size:10.8px;color:#2a2a2a;font-family:'Liberation Sans',sans-serif;left:337px;width:80px;text-align:right;">0.00</div>
<div class="t" style="top:451.0px;line-height:20px;height:20px;font-size:10.3px;color:#3a3a3a;font-family:'Liberation Sans',sans-serif;left:408.5px;width:60px;text-align:right;"><span style="font-size:8.6px">x</span>&#8201;.25%=</div>
<div style="left:471px;top:453px;width:93px;height:15px;background:#fff;"></div>
<div class="t" style="top:450.5px;line-height:20px;height:20px;font-size:10.8px;color:#2a2a2a;font-family:'Liberation Sans',sans-serif;left:482px;width:80px;text-align:right;">0.00</div>
<svg style="position:absolute;left:471px;top:334px;" width="6" height="6" viewBox="0 0 6 6" fill="none"><path d="M0 0 H6 L0 6 Z" fill="#1e8a32"/></svg>
<div class="t" style="top:466.5px;line-height:20px;height:20px;font-size:12.4px;color:#1a1a1a;font-family:'Liberation Serif',serif;left:31.5px;width:40px;text-align:right;">13.</div>
<div class="t" style="top:466.5px;line-height:20px;height:20px;font-size:12.15px;color:#1a1a1a;font-family:'Liberation Serif',serif;font-weight:700;left:77px;">Total State and County Tax <span style="font-weight:400;font-style:italic;font-size:11.45px">(Sum of Lines 4 through 12)</span></div>
<div style="left:471px;top:470px;width:93px;height:15px;background:#fff;"></div>
<div class="t" style="top:467.5px;line-height:20px;height:20px;font-size:10.8px;color:#2a2a2a;font-family:'Liberation Sans',sans-serif;left:482px;width:80px;text-align:right;">9274.47</div>
<div style="left:638px;top:149px;width:511px;height:340px;background:#eaeacd;"></div>
<div style="left:638px;top:149px;width:2px;height:340px;background:#6d2b29;"></div>
<div style="left:1147px;top:149px;width:2px;height:340px;background:#6d2b29;"></div>
<div style="left:638px;top:149px;width:511px;height:2px;background:#0a0a0a;"></div>
<div style="left:657px;top:165px;width:476px;height:2px;background:#6d2b29;"></div>
<div style="left:656px;top:181px;width:261px;height:20px;background:#f1f1d6;border:1px solid #d2d2a4;box-sizing:border-box;"></div>
<div style="left:658px;top:183px;width:257px;height:16px;background:#eaeacd;border:1px solid #d2d2a4;box-sizing:border-box;"></div>
<div style="left:914px;top:181px;width:113px;height:20px;background:#f1f1d6;border:1px solid #d2d2a4;box-sizing:border-box;"></div>
<div style="left:916px;top:183px;width:109px;height:16px;background:#ffff00;border:1px solid #d2d2a4;box-sizing:border-box;"></div>
<div class="t" style="top:181.0px;line-height:20px;height:20px;font-size:12.2px;color:#1a1a1a;font-family:'Liberation Serif',serif;font-weight:700;left:660px;">2% Food Tax</div>
<div class="t" style="top:181.0px;line-height:20px;height:20px;font-size:10.8px;color:#2a2a2a;font-family:'Liberation Sans',sans-serif;left:922px;">$</div>
<div class="t" style="top:181.0px;line-height:20px;height:20px;font-size:10.8px;color:#2a2a2a;font-family:'Liberation Sans',sans-serif;left:939px;width:80px;text-align:right;">7,288.02</div>
<div class="t" style="top:198.5px;line-height:20px;height:20px;font-size:9.95px;color:#333;font-family:'Liberation Sans',sans-serif;left:660px;font-style:italic;">Is at bottom on actual form</div>
<div style="left:656px;top:230px;width:478px;height:18px;background:#c9c998;"></div>
<div style="left:812px;top:233px;width:3px;height:14px;background:#e6e6c6;"></div>
<div style="left:914px;top:233px;width:3px;height:14px;background:#e6e6c6;"></div>
<div style="left:1024px;top:233px;width:3px;height:14px;background:#e6e6c6;"></div>
<div class="t" style="top:229.5px;line-height:20px;height:20px;font-size:12.15px;color:#1a1a1a;font-family:'Liberation Serif',serif;font-weight:700;left:655.5px;width:160px;text-align:center;">County and Code</div>
<div class="t" style="top:229.5px;line-height:20px;height:20px;font-size:12.15px;color:#1a1a1a;font-family:'Liberation Serif',serif;font-weight:700;left:778.5px;width:160px;text-align:center;">County 2 % Tax</div>
<div class="t" style="top:229.5px;line-height:20px;height:20px;font-size:12.15px;color:#1a1a1a;font-family:'Liberation Serif',serif;font-weight:700;left:890.5px;width:160px;text-align:center;">County 2.25 % Tax</div>
<div class="t" style="top:229.5px;line-height:20px;height:20px;font-size:12.15px;color:#1a1a1a;font-family:'Liberation Serif',serif;font-weight:700;left:999.0px;width:160px;text-align:center;">Transit 0.50% Tax</div>
<div style="left:656px;top:247px;width:108px;height:20px;background:#f1f1d6;border:1px solid #d2d2a4;box-sizing:border-box;"></div>
<div style="left:658px;top:249px;width:104px;height:16px;background:#eaeacd;border:1px solid #d2d2a4;box-sizing:border-box;"></div>
<div style="left:761px;top:247px;width:54px;height:20px;background:#f1f1d6;border:1px solid #d2d2a4;box-sizing:border-box;"></div>
<div style="left:763px;top:249px;width:50px;height:16px;background:#eaeacd;border:1px solid #d2d2a4;box-sizing:border-box;"></div>
<div style="left:812px;top:247px;width:105px;height:20px;background:#f1f1d6;border:1px solid #d2d2a4;box-sizing:border-box;"></div>
<div style="left:814px;top:249px;width:101px;height:16px;background:#fff;border:1px solid #d2d2a4;box-sizing:border-box;"></div>
<div style="left:914px;top:247px;width:113px;height:20px;background:#f1f1d6;border:1px solid #d2d2a4;box-sizing:border-box;"></div>
<div style="left:916px;top:249px;width:109px;height:16px;background:#fff;border:1px solid #d2d2a4;box-sizing:border-box;"></div>
<div style="left:1024px;top:247px;width:110px;height:20px;background:#f1f1d6;border:1px solid #d2d2a4;box-sizing:border-box;"></div>
<div style="left:1026px;top:249px;width:106px;height:16px;background:#fff;border:1px solid #d2d2a4;box-sizing:border-box;"></div>
<div style="left:656px;top:264px;width:108px;height:20px;background:#f1f1d6;border:1px solid #d2d2a4;box-sizing:border-box;"></div>
<div style="left:658px;top:266px;width:104px;height:16px;background:#eaeacd;border:1px solid #d2d2a4;box-sizing:border-box;"></div>
<div style="left:761px;top:264px;width:54px;height:20px;background:#f1f1d6;border:1px solid #d2d2a4;box-sizing:border-box;"></div>
<div style="left:763px;top:266px;width:50px;height:16px;background:#eaeacd;border:1px solid #d2d2a4;box-sizing:border-box;"></div>
<div style="left:812px;top:264px;width:105px;height:20px;background:#f1f1d6;border:1px solid #d2d2a4;box-sizing:border-box;"></div>
<div style="left:814px;top:266px;width:101px;height:16px;background:#fff;border:1px solid #d2d2a4;box-sizing:border-box;"></div>
<div style="left:914px;top:264px;width:113px;height:20px;background:#f1f1d6;border:1px solid #d2d2a4;box-sizing:border-box;"></div>
<div style="left:916px;top:266px;width:109px;height:16px;background:#fff;border:1px solid #d2d2a4;box-sizing:border-box;"></div>
<div style="left:1024px;top:264px;width:110px;height:20px;background:#f1f1d6;border:1px solid #d2d2a4;box-sizing:border-box;"></div>
<div style="left:1026px;top:266px;width:106px;height:16px;background:#fff;border:1px solid #d2d2a4;box-sizing:border-box;"></div>
<div style="left:656px;top:281px;width:108px;height:20px;background:#f1f1d6;border:1px solid #d2d2a4;box-sizing:border-box;"></div>
<div style="left:658px;top:283px;width:104px;height:16px;background:#eaeacd;border:1px solid #d2d2a4;box-sizing:border-box;"></div>
<div style="left:761px;top:281px;width:54px;height:20px;background:#f1f1d6;border:1px solid #d2d2a4;box-sizing:border-box;"></div>
<div style="left:763px;top:283px;width:50px;height:16px;background:#eaeacd;border:1px solid #d2d2a4;box-sizing:border-box;"></div>
<div style="left:812px;top:281px;width:105px;height:20px;background:#f1f1d6;border:1px solid #d2d2a4;box-sizing:border-box;"></div>
<div style="left:814px;top:283px;width:101px;height:16px;background:#fff;border:1px solid #d2d2a4;box-sizing:border-box;"></div>
<div style="left:914px;top:281px;width:113px;height:20px;background:#f1f1d6;border:1px solid #d2d2a4;box-sizing:border-box;"></div>
<div style="left:916px;top:283px;width:109px;height:16px;background:#fff;border:1px solid #d2d2a4;box-sizing:border-box;"></div>
<div style="left:1024px;top:281px;width:110px;height:20px;background:#f1f1d6;border:1px solid #d2d2a4;box-sizing:border-box;"></div>
<div style="left:1026px;top:283px;width:106px;height:16px;background:#fff;border:1px solid #d2d2a4;box-sizing:border-box;"></div>
<div style="left:656px;top:298px;width:108px;height:20px;background:#f1f1d6;border:1px solid #d2d2a4;box-sizing:border-box;"></div>
<div style="left:658px;top:300px;width:104px;height:16px;background:#eaeacd;border:1px solid #d2d2a4;box-sizing:border-box;"></div>
<div style="left:761px;top:298px;width:54px;height:20px;background:#f1f1d6;border:1px solid #d2d2a4;box-sizing:border-box;"></div>
<div style="left:763px;top:300px;width:50px;height:16px;background:#eaeacd;border:1px solid #d2d2a4;box-sizing:border-box;"></div>
<div style="left:812px;top:298px;width:105px;height:20px;background:#f1f1d6;border:1px solid #d2d2a4;box-sizing:border-box;"></div>
<div style="left:814px;top:300px;width:101px;height:16px;background:#fff;border:1px solid #d2d2a4;box-sizing:border-box;"></div>
<div style="left:914px;top:298px;width:113px;height:20px;background:#f1f1d6;border:1px solid #d2d2a4;box-sizing:border-box;"></div>
<div style="left:916px;top:300px;width:109px;height:16px;background:#fff;border:1px solid #d2d2a4;box-sizing:border-box;"></div>
<div style="left:1024px;top:298px;width:110px;height:20px;background:#f1f1d6;border:1px solid #d2d2a4;box-sizing:border-box;"></div>
<div style="left:1026px;top:300px;width:106px;height:16px;background:#fff;border:1px solid #d2d2a4;box-sizing:border-box;"></div>
<div style="left:656px;top:315px;width:108px;height:20px;background:#f1f1d6;border:1px solid #d2d2a4;box-sizing:border-box;"></div>
<div style="left:658px;top:317px;width:104px;height:16px;background:#eaeacd;border:1px solid #d2d2a4;box-sizing:border-box;"></div>
<div style="left:761px;top:315px;width:54px;height:20px;background:#f1f1d6;border:1px solid #d2d2a4;box-sizing:border-box;"></div>
<div style="left:763px;top:317px;width:50px;height:16px;background:#eaeacd;border:1px solid #d2d2a4;box-sizing:border-box;"></div>
<div style="left:812px;top:315px;width:105px;height:20px;background:#f1f1d6;border:1px solid #d2d2a4;box-sizing:border-box;"></div>
<div style="left:814px;top:317px;width:101px;height:16px;background:#fff;border:1px solid #d2d2a4;box-sizing:border-box;"></div>
<div style="left:914px;top:315px;width:113px;height:20px;background:#f1f1d6;border:1px solid #d2d2a4;box-sizing:border-box;"></div>
<div style="left:916px;top:317px;width:109px;height:16px;background:#fff;border:1px solid #d2d2a4;box-sizing:border-box;"></div>
<div style="left:1024px;top:315px;width:110px;height:20px;background:#f1f1d6;border:1px solid #d2d2a4;box-sizing:border-box;"></div>
<div style="left:1026px;top:317px;width:106px;height:16px;background:#fff;border:1px solid #d2d2a4;box-sizing:border-box;"></div>
<div style="left:656px;top:332px;width:108px;height:20px;background:#f1f1d6;border:1px solid #d2d2a4;box-sizing:border-box;"></div>
<div style="left:658px;top:334px;width:104px;height:16px;background:#eaeacd;border:1px solid #d2d2a4;box-sizing:border-box;"></div>
<div style="left:761px;top:332px;width:54px;height:20px;background:#f1f1d6;border:1px solid #d2d2a4;box-sizing:border-box;"></div>
<div style="left:763px;top:334px;width:50px;height:16px;background:#eaeacd;border:1px solid #d2d2a4;box-sizing:border-box;"></div>
<div style="left:812px;top:332px;width:105px;height:20px;background:#f1f1d6;border:1px solid #d2d2a4;box-sizing:border-box;"></div>
<div style="left:814px;top:334px;width:101px;height:16px;background:#fff;border:1px solid #d2d2a4;box-sizing:border-box;"></div>
<div style="left:914px;top:332px;width:113px;height:20px;background:#f1f1d6;border:1px solid #d2d2a4;box-sizing:border-box;"></div>
<div style="left:916px;top:334px;width:109px;height:16px;background:#fff;border:1px solid #d2d2a4;box-sizing:border-box;"></div>
<div style="left:1024px;top:332px;width:110px;height:20px;background:#f1f1d6;border:1px solid #d2d2a4;box-sizing:border-box;"></div>
<div style="left:1026px;top:334px;width:106px;height:16px;background:#fff;border:1px solid #d2d2a4;box-sizing:border-box;"></div>
<div style="left:656px;top:349px;width:108px;height:20px;background:#f1f1d6;border:1px solid #d2d2a4;box-sizing:border-box;"></div>
<div style="left:658px;top:351px;width:104px;height:16px;background:#eaeacd;border:1px solid #d2d2a4;box-sizing:border-box;"></div>
<div style="left:761px;top:349px;width:54px;height:20px;background:#f1f1d6;border:1px solid #d2d2a4;box-sizing:border-box;"></div>
<div style="left:763px;top:351px;width:50px;height:16px;background:#eaeacd;border:1px solid #d2d2a4;box-sizing:border-box;"></div>
<div style="left:812px;top:349px;width:105px;height:20px;background:#f1f1d6;border:1px solid #d2d2a4;box-sizing:border-box;"></div>
<div style="left:814px;top:351px;width:101px;height:16px;background:#fff;border:1px solid #d2d2a4;box-sizing:border-box;"></div>
<div style="left:914px;top:349px;width:113px;height:20px;background:#f1f1d6;border:1px solid #d2d2a4;box-sizing:border-box;"></div>
<div style="left:916px;top:351px;width:109px;height:16px;background:#fff;border:1px solid #d2d2a4;box-sizing:border-box;"></div>
<div style="left:1024px;top:349px;width:110px;height:20px;background:#f1f1d6;border:1px solid #d2d2a4;box-sizing:border-box;"></div>
<div style="left:1026px;top:351px;width:106px;height:16px;background:#fff;border:1px solid #d2d2a4;box-sizing:border-box;"></div>
<div style="left:656px;top:366px;width:108px;height:20px;background:#f1f1d6;border:1px solid #d2d2a4;box-sizing:border-box;"></div>
<div style="left:658px;top:368px;width:104px;height:16px;background:#eaeacd;border:1px solid #d2d2a4;box-sizing:border-box;"></div>
<div style="left:761px;top:366px;width:54px;height:20px;background:#f1f1d6;border:1px solid #d2d2a4;box-sizing:border-box;"></div>
<div style="left:763px;top:368px;width:50px;height:16px;background:#eaeacd;border:1px solid #d2d2a4;box-sizing:border-box;"></div>
<div style="left:812px;top:366px;width:105px;height:20px;background:#f1f1d6;border:1px solid #d2d2a4;box-sizing:border-box;"></div>
<div style="left:814px;top:368px;width:101px;height:16px;background:#fff;border:1px solid #d2d2a4;box-sizing:border-box;"></div>
<div style="left:914px;top:366px;width:113px;height:20px;background:#f1f1d6;border:1px solid #d2d2a4;box-sizing:border-box;"></div>
<div style="left:916px;top:368px;width:109px;height:16px;background:#fff;border:1px solid #d2d2a4;box-sizing:border-box;"></div>
<div style="left:1024px;top:366px;width:110px;height:20px;background:#f1f1d6;border:1px solid #d2d2a4;box-sizing:border-box;"></div>
<div style="left:1026px;top:368px;width:106px;height:16px;background:#fff;border:1px solid #d2d2a4;box-sizing:border-box;"></div>
<div style="left:656px;top:383px;width:108px;height:20px;background:#f1f1d6;border:1px solid #d2d2a4;box-sizing:border-box;"></div>
<div style="left:658px;top:385px;width:104px;height:16px;background:#eaeacd;border:1px solid #d2d2a4;box-sizing:border-box;"></div>
<div style="left:761px;top:383px;width:54px;height:20px;background:#f1f1d6;border:1px solid #d2d2a4;box-sizing:border-box;"></div>
<div style="left:763px;top:385px;width:50px;height:16px;background:#eaeacd;border:1px solid #d2d2a4;box-sizing:border-box;"></div>
<div style="left:812px;top:383px;width:105px;height:20px;background:#f1f1d6;border:1px solid #d2d2a4;box-sizing:border-box;"></div>
<div style="left:814px;top:385px;width:101px;height:16px;background:#fff;border:1px solid #d2d2a4;box-sizing:border-box;"></div>
<div style="left:914px;top:383px;width:113px;height:20px;background:#f1f1d6;border:1px solid #d2d2a4;box-sizing:border-box;"></div>
<div style="left:916px;top:385px;width:109px;height:16px;background:#fff;border:1px solid #d2d2a4;box-sizing:border-box;"></div>
<div style="left:1024px;top:383px;width:110px;height:20px;background:#f1f1d6;border:1px solid #d2d2a4;box-sizing:border-box;"></div>
<div style="left:1026px;top:385px;width:106px;height:16px;background:#fff;border:1px solid #d2d2a4;box-sizing:border-box;"></div>
<div style="left:656px;top:400px;width:108px;height:20px;background:#f1f1d6;border:1px solid #d2d2a4;box-sizing:border-box;"></div>
<div style="left:658px;top:402px;width:104px;height:16px;background:#eaeacd;border:1px solid #d2d2a4;box-sizing:border-box;"></div>
<div style="left:761px;top:400px;width:54px;height:20px;background:#f1f1d6;border:1px solid #d2d2a4;box-sizing:border-box;"></div>
<div style="left:763px;top:402px;width:50px;height:16px;background:#eaeacd;border:1px solid #d2d2a4;box-sizing:border-box;"></div>
<div style="left:812px;top:400px;width:105px;height:20px;background:#f1f1d6;border:1px solid #d2d2a4;box-sizing:border-box;"></div>
<div style="left:814px;top:402px;width:101px;height:16px;background:#fff;border:1px solid #d2d2a4;box-sizing:border-box;"></div>
<div style="left:914px;top:400px;width:113px;height:20px;background:#f1f1d6;border:1px solid #d2d2a4;box-sizing:border-box;"></div>
<div style="left:916px;top:402px;width:109px;height:16px;background:#fff;border:1px solid #d2d2a4;box-sizing:border-box;"></div>
<div style="left:1024px;top:400px;width:110px;height:20px;background:#f1f1d6;border:1px solid #d2d2a4;box-sizing:border-box;"></div>
<div style="left:1026px;top:402px;width:106px;height:16px;background:#fff;border:1px solid #d2d2a4;box-sizing:border-box;"></div>
<div style="left:656px;top:417px;width:108px;height:20px;background:#f1f1d6;border:1px solid #d2d2a4;box-sizing:border-box;"></div>
<div style="left:658px;top:419px;width:104px;height:16px;background:#eaeacd;border:1px solid #d2d2a4;box-sizing:border-box;"></div>
<div style="left:761px;top:417px;width:54px;height:20px;background:#f1f1d6;border:1px solid #d2d2a4;box-sizing:border-box;"></div>
<div style="left:763px;top:419px;width:50px;height:16px;background:#eaeacd;border:1px solid #d2d2a4;box-sizing:border-box;"></div>
<div style="left:812px;top:417px;width:105px;height:20px;background:#f1f1d6;border:1px solid #d2d2a4;box-sizing:border-box;"></div>
<div style="left:814px;top:419px;width:101px;height:16px;background:#fff;border:1px solid #d2d2a4;box-sizing:border-box;"></div>
<div style="left:914px;top:417px;width:113px;height:20px;background:#f1f1d6;border:1px solid #d2d2a4;box-sizing:border-box;"></div>
<div style="left:916px;top:419px;width:109px;height:16px;background:#fff;border:1px solid #d2d2a4;box-sizing:border-box;"></div>
<div style="left:1024px;top:417px;width:110px;height:20px;background:#f1f1d6;border:1px solid #d2d2a4;box-sizing:border-box;"></div>
<div style="left:1026px;top:419px;width:106px;height:16px;background:#fff;border:1px solid #d2d2a4;box-sizing:border-box;"></div>
<div style="left:656px;top:434px;width:108px;height:20px;background:#f1f1d6;border:1px solid #d2d2a4;box-sizing:border-box;"></div>
<div style="left:658px;top:436px;width:104px;height:16px;background:#eaeacd;border:1px solid #d2d2a4;box-sizing:border-box;"></div>
<div style="left:761px;top:434px;width:54px;height:20px;background:#f1f1d6;border:1px solid #d2d2a4;box-sizing:border-box;"></div>
<div style="left:763px;top:436px;width:50px;height:16px;background:#eaeacd;border:1px solid #d2d2a4;box-sizing:border-box;"></div>
<div style="left:812px;top:434px;width:105px;height:20px;background:#f1f1d6;border:1px solid #d2d2a4;box-sizing:border-box;"></div>
<div style="left:814px;top:436px;width:101px;height:16px;background:#fff;border:1px solid #d2d2a4;box-sizing:border-box;"></div>
<div style="left:914px;top:434px;width:113px;height:20px;background:#f1f1d6;border:1px solid #d2d2a4;box-sizing:border-box;"></div>
<div style="left:916px;top:436px;width:109px;height:16px;background:#fff;border:1px solid #d2d2a4;box-sizing:border-box;"></div>
<div style="left:1024px;top:434px;width:110px;height:20px;background:#f1f1d6;border:1px solid #d2d2a4;box-sizing:border-box;"></div>
<div style="left:1026px;top:436px;width:106px;height:16px;background:#fff;border:1px solid #d2d2a4;box-sizing:border-box;"></div>
<div style="left:656px;top:451px;width:108px;height:20px;background:#f1f1d6;border:1px solid #d2d2a4;box-sizing:border-box;"></div>
<div style="left:658px;top:453px;width:104px;height:16px;background:#eaeacd;border:1px solid #d2d2a4;box-sizing:border-box;"></div>
<div style="left:761px;top:451px;width:54px;height:20px;background:#f1f1d6;border:1px solid #d2d2a4;box-sizing:border-box;"></div>
<div style="left:763px;top:453px;width:50px;height:16px;background:#eaeacd;border:1px solid #d2d2a4;box-sizing:border-box;"></div>
<div style="left:812px;top:451px;width:105px;height:20px;background:#f1f1d6;border:1px solid #d2d2a4;box-sizing:border-box;"></div>
<div style="left:814px;top:453px;width:101px;height:16px;background:#fff;border:1px solid #d2d2a4;box-sizing:border-box;"></div>
<div style="left:914px;top:451px;width:113px;height:20px;background:#f1f1d6;border:1px solid #d2d2a4;box-sizing:border-box;"></div>
<div style="left:916px;top:453px;width:109px;height:16px;background:#fff;border:1px solid #d2d2a4;box-sizing:border-box;"></div>
<div style="left:1024px;top:451px;width:110px;height:20px;background:#f1f1d6;border:1px solid #d2d2a4;box-sizing:border-box;"></div>
<div style="left:1026px;top:453px;width:106px;height:16px;background:#fff;border:1px solid #d2d2a4;box-sizing:border-box;"></div>
<div style="left:656px;top:468px;width:108px;height:20px;background:#f1f1d6;border:1px solid #d2d2a4;box-sizing:border-box;"></div>
<div style="left:658px;top:470px;width:104px;height:16px;background:#eaeacd;border:1px solid #d2d2a4;box-sizing:border-box;"></div>
<div style="left:761px;top:468px;width:54px;height:20px;background:#f1f1d6;border:1px solid #d2d2a4;box-sizing:border-box;"></div>
<div style="left:763px;top:470px;width:50px;height:16px;background:#eaeacd;border:1px solid #d2d2a4;box-sizing:border-box;"></div>
<div style="left:812px;top:468px;width:105px;height:20px;background:#f1f1d6;border:1px solid #d2d2a4;box-sizing:border-box;"></div>
<div style="left:814px;top:470px;width:101px;height:16px;background:#fff;border:1px solid #d2d2a4;box-sizing:border-box;"></div>
<div style="left:914px;top:468px;width:113px;height:20px;background:#f1f1d6;border:1px solid #d2d2a4;box-sizing:border-box;"></div>
<div style="left:916px;top:470px;width:109px;height:16px;background:#fff;border:1px solid #d2d2a4;box-sizing:border-box;"></div>
<div style="left:1024px;top:468px;width:110px;height:20px;background:#f1f1d6;border:1px solid #d2d2a4;box-sizing:border-box;"></div>
<div style="left:1026px;top:470px;width:106px;height:16px;background:#fff;border:1px solid #d2d2a4;box-sizing:border-box;"></div>
<div style="left:656px;top:485px;width:108px;height:20px;background:#f1f1d6;border:1px solid #d2d2a4;box-sizing:border-box;"></div>
<div style="left:658px;top:487px;width:104px;height:16px;background:#eaeacd;border:1px solid #d2d2a4;box-sizing:border-box;"></div>
<div style="left:761px;top:485px;width:54px;height:20px;background:#f1f1d6;border:1px solid #d2d2a4;box-sizing:border-box;"></div>
<div style="left:763px;top:487px;width:50px;height:16px;background:#eaeacd;border:1px solid #d2d2a4;box-sizing:border-box;"></div>
<div style="left:812px;top:485px;width:105px;height:20px;background:#f1f1d6;border:1px solid #d2d2a4;box-sizing:border-box;"></div>
<div style="left:814px;top:487px;width:101px;height:16px;background:#fff;border:1px solid #d2d2a4;box-sizing:border-box;"></div>
<div style="left:914px;top:485px;width:113px;height:20px;background:#f1f1d6;border:1px solid #d2d2a4;box-sizing:border-box;"></div>
<div style="left:916px;top:487px;width:109px;height:16px;background:#fff;border:1px solid #d2d2a4;box-sizing:border-box;"></div>
<div style="left:1024px;top:485px;width:110px;height:20px;background:#f1f1d6;border:1px solid #d2d2a4;box-sizing:border-box;"></div>
<div style="left:1026px;top:487px;width:106px;height:16px;background:#fff;border:1px solid #d2d2a4;box-sizing:border-box;"></div>
<div class="t" style="top:247.0px;line-height:20px;height:20px;font-size:12.2px;color:#1a1a1a;font-family:'Liberation Serif',serif;font-weight:700;left:660px;">Duplin</div>
<div class="t" style="top:247.0px;line-height:20px;height:20px;font-size:12.2px;color:#1a1a1a;font-family:'Liberation Serif',serif;font-weight:700;left:767.5px;width:40px;text-align:center;">31</div>
<div class="t" style="top:265.0px;line-height:20px;height:20px;font-size:10.4px;color:#1a1a1a;font-family:'Liberation Sans',sans-serif;font-weight:700;left:660px;">Mecklenburg</div>
<div class="t" style="top:264.0px;line-height:20px;height:20px;font-size:12.2px;color:#1a1a1a;font-family:'Liberation Serif',serif;font-weight:700;left:767.5px;width:40px;text-align:center;">60</div>
<div class="t" style="top:247.0px;line-height:20px;height:20px;font-size:10.8px;color:#2a2a2a;font-family:'Liberation Sans',sans-serif;left:922px;">$</div>
<div class="t" style="top:247.0px;line-height:20px;height:20px;font-size:10.8px;color:#2a2a2a;font-family:'Liberation Sans',sans-serif;left:939px;width:80px;text-align:right;">45.00</div>
<div class="t" style="top:247.0px;line-height:20px;height:20px;font-size:10.8px;color:#2a2a2a;font-family:'Liberation Sans',sans-serif;left:1032px;">$</div>
<div class="t" style="top:247.0px;line-height:20px;height:20px;font-size:10.8px;color:#2a2a2a;font-family:'Liberation Sans',sans-serif;left:1033px;width:80px;text-align:right;">-</div>
<div class="t" style="top:264.0px;line-height:20px;height:20px;font-size:10.8px;color:#2a2a2a;font-family:'Liberation Sans',sans-serif;left:820px;">$</div>
<div class="t" style="top:264.0px;line-height:20px;height:20px;font-size:10.8px;color:#2a2a2a;font-family:'Liberation Sans',sans-serif;left:829px;width:80px;text-align:right;">509.36</div>
<div class="t" style="top:264.0px;line-height:20px;height:20px;font-size:10.8px;color:#2a2a2a;font-family:'Liberation Sans',sans-serif;left:1032px;">$</div>
<div class="t" style="top:264.0px;line-height:20px;height:20px;font-size:10.8px;color:#2a2a2a;font-family:'Liberation Sans',sans-serif;left:1046px;width:80px;text-align:right;">127.34</div>
<div style="left:0px;top:0px;width:1258px;height:17px;background:#0e0e0e;"></div>
<div style="left:0px;top:0px;width:23px;height:480px;background:#0e0e0e;"></div>
<div style="left:0px;top:16px;width:1258px;height:1px;background:#3a3a3a;"></div>
<svg style="position:absolute;left:12px;top:5px;" width="8" height="8" viewBox="0 0 8 8" fill="none"><path d="M8 0 V8 H0 Z" fill="#5a5a5a"/></svg>
<div style="left:22px;top:1px;width:1px;height:16px;background:#6c6c6c;"></div>
<div style="left:35px;top:1px;width:1px;height:16px;background:#6c6c6c;"></div>
<div class="t" style="top:-1.0px;line-height:20px;height:20px;font-size:12.4px;color:#d8d8d8;font-family:'Liberation Sans',sans-serif;left:14.0px;width:30px;text-align:center;">A</div>
<div style="left:74px;top:1px;width:1px;height:16px;background:#6c6c6c;"></div>
<div class="t" style="top:-1.0px;line-height:20px;height:20px;font-size:12.4px;color:#d8d8d8;font-family:'Liberation Sans',sans-serif;left:40.0px;width:30px;text-align:center;">B</div>
<div style="left:140px;top:1px;width:1px;height:16px;background:#6c6c6c;"></div>
<div class="t" style="top:-1.0px;line-height:20px;height:20px;font-size:12.4px;color:#d8d8d8;font-family:'Liberation Sans',sans-serif;left:92.5px;width:30px;text-align:center;">C</div>
<div style="left:205px;top:1px;width:1px;height:16px;background:#6c6c6c;"></div>
<div class="t" style="top:-1.0px;line-height:20px;height:20px;font-size:12.4px;color:#d8d8d8;font-family:'Liberation Sans',sans-serif;left:158.0px;width:30px;text-align:center;">D</div>
<div style="left:256px;top:1px;width:1px;height:16px;background:#6c6c6c;"></div>
<div class="t" style="top:-1.0px;line-height:20px;height:20px;font-size:12.4px;color:#d8d8d8;font-family:'Liberation Sans',sans-serif;left:216.0px;width:30px;text-align:center;">E</div>
<div style="left:307px;top:1px;width:1px;height:16px;background:#6c6c6c;"></div>
<div class="t" style="top:-1.0px;line-height:20px;height:20px;font-size:12.4px;color:#d8d8d8;font-family:'Liberation Sans',sans-serif;left:267.0px;width:30px;text-align:center;">F</div>
<div style="left:318px;top:1px;width:1px;height:16px;background:#6c6c6c;"></div>
<div class="t" style="top:-1.0px;line-height:20px;height:20px;font-size:12.4px;color:#d8d8d8;font-family:'Liberation Sans',sans-serif;left:298.0px;width:30px;text-align:center;">G</div>
<div style="left:368px;top:1px;width:1px;height:16px;background:#6c6c6c;"></div>
<div class="t" style="top:-1.0px;line-height:20px;height:20px;font-size:12.4px;color:#d8d8d8;font-family:'Liberation Sans',sans-serif;left:328.5px;width:30px;text-align:center;">H</div>
<div style="left:419px;top:1px;width:1px;height:16px;background:#6c6c6c;"></div>
<div class="t" style="top:-1.0px;line-height:20px;height:20px;font-size:12.4px;color:#d8d8d8;font-family:'Liberation Sans',sans-serif;left:379.0px;width:30px;text-align:center;">I</div>
<div style="left:470px;top:1px;width:1px;height:16px;background:#6c6c6c;"></div>
<div class="t" style="top:-1.0px;line-height:20px;height:20px;font-size:12.4px;color:#d8d8d8;font-family:'Liberation Sans',sans-serif;left:430.0px;width:30px;text-align:center;">J</div>
<div style="left:565px;top:1px;width:1px;height:16px;background:#6c6c6c;"></div>
<div class="t" style="top:-1.0px;line-height:20px;height:20px;font-size:12.4px;color:#d8d8d8;font-family:'Liberation Sans',sans-serif;left:503.0px;width:30px;text-align:center;">K</div>
<div style="left:580px;top:1px;width:1px;height:16px;background:#6c6c6c;"></div>
<div class="t" style="top:-1.0px;line-height:20px;height:20px;font-size:12.4px;color:#d8d8d8;font-family:'Liberation Sans',sans-serif;left:558.0px;width:30px;text-align:center;">L</div>
<div style="left:639px;top:1px;width:1px;height:16px;background:#6c6c6c;"></div>
<div class="t" style="top:-1.0px;line-height:20px;height:20px;font-size:12.4px;color:#d8d8d8;font-family:'Liberation Sans',sans-serif;left:595.0px;width:30px;text-align:center;">M</div>
<div style="left:657px;top:1px;width:1px;height:16px;background:#6c6c6c;"></div>
<div class="t" style="top:-1.0px;line-height:20px;height:20px;font-size:12.4px;color:#d8d8d8;font-family:'Liberation Sans',sans-serif;left:633.5px;width:30px;text-align:center;">N</div>
<div style="left:762px;top:1px;width:1px;height:16px;background:#6c6c6c;"></div>
<div class="t" style="top:-1.0px;line-height:20px;height:20px;font-size:12.4px;color:#d8d8d8;font-family:'Liberation Sans',sans-serif;left:695.0px;width:30px;text-align:center;">O</div>
<div style="left:813px;top:1px;width:1px;height:16px;background:#6c6c6c;"></div>
<div class="t" style="top:-1.0px;line-height:20px;height:20px;font-size:12.4px;color:#d8d8d8;font-family:'Liberation Sans',sans-serif;left:773.0px;width:30px;text-align:center;">P</div>
<div style="left:864px;top:1px;width:1px;height:16px;background:#6c6c6c;"></div>
<div class="t" style="top:-1.0px;line-height:20px;height:20px;font-size:12.4px;color:#d8d8d8;font-family:'Liberation Sans',sans-serif;left:824.0px;width:30px;text-align:center;">Q</div>
<div style="left:915px;top:1px;width:1px;height:16px;background:#6c6c6c;"></div>
<div class="t" style="top:-1.0px;line-height:20px;height:20px;font-size:12.4px;color:#d8d8d8;font-family:'Liberation Sans',sans-serif;left:875.0px;width:30px;text-align:center;">R</div>
<div style="left:966px;top:1px;width:1px;height:16px;background:#6c6c6c;"></div>
<div class="t" style="top:-1.0px;line-height:20px;height:20px;font-size:12.4px;color:#d8d8d8;font-family:'Liberation Sans',sans-serif;left:926.0px;width:30px;text-align:center;">S</div>
<div style="left:1025px;top:1px;width:1px;height:16px;background:#6c6c6c;"></div>
<div class="t" style="top:-1.0px;line-height:20px;height:20px;font-size:12.4px;color:#d8d8d8;font-family:'Liberation Sans',sans-serif;left:981.0px;width:30px;text-align:center;">T</div>
<div style="left:1132px;top:1px;width:1px;height:16px;background:#6c6c6c;"></div>
<div class="t" style="top:-1.0px;line-height:20px;height:20px;font-size:12.4px;color:#d8d8d8;font-family:'Liberation Sans',sans-serif;left:1064.0px;width:30px;text-align:center;">U</div>
<div style="left:1148px;top:1px;width:1px;height:16px;background:#6c6c6c;"></div>
<div class="t" style="top:-1.0px;line-height:20px;height:20px;font-size:12.4px;color:#d8d8d8;font-family:'Liberation Sans',sans-serif;left:1125.5px;width:30px;text-align:center;">V</div>
<div style="left:1199px;top:1px;width:1px;height:16px;background:#6c6c6c;"></div>
<div class="t" style="top:-1.0px;line-height:20px;height:20px;font-size:12.4px;color:#d8d8d8;font-family:'Liberation Sans',sans-serif;left:1159.0px;width:30px;text-align:center;">W</div>
<div style="left:1250px;top:1px;width:1px;height:16px;background:#6c6c6c;"></div>
<div class="t" style="top:-1.0px;line-height:20px;height:20px;font-size:12.4px;color:#d8d8d8;font-family:'Liberation Sans',sans-serif;left:1210.0px;width:30px;text-align:center;">X</div>
<div style="left:0px;top:35px;width:22px;height:1px;background:#474747;"></div>
<div class="t" style="top:17.0px;line-height:20px;height:20px;font-size:12px;color:#e0e0e0;font-family:'Liberation Sans',sans-serif;left:-1.0px;width:24px;text-align:center;transform:scaleX(.95);">1</div>
<div style="left:0px;top:50px;width:22px;height:1px;background:#474747;"></div>
<div class="t" style="top:34.0px;line-height:20px;height:20px;font-size:12px;color:#e0e0e0;font-family:'Liberation Sans',sans-serif;left:-1.0px;width:24px;text-align:center;transform:scaleX(.95);">2</div>
<div style="left:0px;top:65px;width:22px;height:1px;background:#474747;"></div>
<div class="t" style="top:49.0px;line-height:20px;height:20px;font-size:12px;color:#e0e0e0;font-family:'Liberation Sans',sans-serif;left:-1.0px;width:24px;text-align:center;transform:scaleX(.95);">3</div>
<div style="left:0px;top:80px;width:22px;height:1px;background:#474747;"></div>
<div class="t" style="top:64.0px;line-height:20px;height:20px;font-size:12px;color:#e0e0e0;font-family:'Liberation Sans',sans-serif;left:-1.0px;width:24px;text-align:center;transform:scaleX(.95);">4</div>
<div style="left:0px;top:81px;width:22px;height:34px;background:#5c5c5c;"></div>
<div style="left:21px;top:81px;width:2px;height:34px;background:#2f8a57;"></div>
<div style="left:0px;top:115px;width:22px;height:1px;background:#474747;"></div>
<div class="t" style="top:98.0px;line-height:20px;height:20px;font-size:12px;color:#e0e0e0;font-family:'Liberation Sans',sans-serif;left:-1.0px;width:24px;text-align:center;transform:scaleX(.95);">5</div>
<div style="left:0px;top:149px;width:22px;height:1px;background:#474747;"></div>
<div class="t" style="top:132.0px;line-height:20px;height:20px;font-size:12px;color:#e0e0e0;font-family:'Liberation Sans',sans-serif;left:-1.0px;width:24px;text-align:center;transform:scaleX(.95);">6</div>
<div style="left:0px;top:166px;width:22px;height:1px;background:#474747;"></div>
<div class="t" style="top:149.0px;line-height:20px;height:20px;font-size:12px;color:#e0e0e0;font-family:'Liberation Sans',sans-serif;left:-1.0px;width:24px;text-align:center;transform:scaleX(.95);">7</div>
<div style="left:0px;top:182px;width:22px;height:1px;background:#474747;"></div>
<div class="t" style="top:165.5px;line-height:20px;height:20px;font-size:12px;color:#e0e0e0;font-family:'Liberation Sans',sans-serif;left:-1.0px;width:24px;text-align:center;transform:scaleX(.95);">8</div>
<div style="left:0px;top:199px;width:22px;height:1px;background:#474747;"></div>
<div class="t" style="top:182.0px;line-height:20px;height:20px;font-size:12px;color:#e0e0e0;font-family:'Liberation Sans',sans-serif;left:-1.0px;width:24px;text-align:center;transform:scaleX(.95);">9</div>
<div style="left:0px;top:215px;width:22px;height:1px;background:#474747;"></div>
<div class="t" style="top:198.5px;line-height:20px;height:20px;font-size:12px;color:#e0e0e0;font-family:'Liberation Sans',sans-serif;left:-1.0px;width:24px;text-align:center;transform:scaleX(.95);">10</div>
<div style="left:0px;top:231px;width:22px;height:1px;background:#474747;"></div>
<div class="t" style="top:214.5px;line-height:20px;height:20px;font-size:12px;color:#e0e0e0;font-family:'Liberation Sans',sans-serif;left:-1.0px;width:24px;text-align:center;transform:scaleX(.95);">11</div>
<div style="left:0px;top:248px;width:22px;height:1px;background:#474747;"></div>
<div class="t" style="top:231.0px;line-height:20px;height:20px;font-size:12px;color:#e0e0e0;font-family:'Liberation Sans',sans-serif;left:-1.0px;width:24px;text-align:center;transform:scaleX(.95);">12</div>
<div style="left:0px;top:265px;width:22px;height:1px;background:#474747;"></div>
<div class="t" style="top:248.0px;line-height:20px;height:20px;font-size:12px;color:#e0e0e0;font-family:'Liberation Sans',sans-serif;left:-1.0px;width:24px;text-align:center;transform:scaleX(.95);">13</div>
<div style="left:0px;top:282px;width:22px;height:1px;background:#474747;"></div>
<div class="t" style="top:265.0px;line-height:20px;height:20px;font-size:12px;color:#e0e0e0;font-family:'Liberation Sans',sans-serif;left:-1.0px;width:24px;text-align:center;transform:scaleX(.95);">14</div>
<div style="left:0px;top:299px;width:22px;height:1px;background:#474747;"></div>
<div class="t" style="top:282.0px;line-height:20px;height:20px;font-size:12px;color:#e0e0e0;font-family:'Liberation Sans',sans-serif;left:-1.0px;width:24px;text-align:center;transform:scaleX(.95);">15</div>
<div style="left:0px;top:316px;width:22px;height:1px;background:#474747;"></div>
<div class="t" style="top:299.0px;line-height:20px;height:20px;font-size:12px;color:#e0e0e0;font-family:'Liberation Sans',sans-serif;left:-1.0px;width:24px;text-align:center;transform:scaleX(.95);">16</div>
<div style="left:0px;top:333px;width:22px;height:1px;background:#474747;"></div>
<div class="t" style="top:316.0px;line-height:20px;height:20px;font-size:12px;color:#e0e0e0;font-family:'Liberation Sans',sans-serif;left:-1.0px;width:24px;text-align:center;transform:scaleX(.95);">17</div>
<div style="left:0px;top:350px;width:22px;height:1px;background:#474747;"></div>
<div class="t" style="top:333.0px;line-height:20px;height:20px;font-size:12px;color:#e0e0e0;font-family:'Liberation Sans',sans-serif;left:-1.0px;width:24px;text-align:center;transform:scaleX(.95);">18</div>
<div style="left:0px;top:367px;width:22px;height:1px;background:#474747;"></div>
<div class="t" style="top:350.0px;line-height:20px;height:20px;font-size:12px;color:#e0e0e0;font-family:'Liberation Sans',sans-serif;left:-1.0px;width:24px;text-align:center;transform:scaleX(.95);">19</div>
<div style="left:0px;top:384px;width:22px;height:1px;background:#474747;"></div>
<div class="t" style="top:367.0px;line-height:20px;height:20px;font-size:12px;color:#e0e0e0;font-family:'Liberation Sans',sans-serif;left:-1.0px;width:24px;text-align:center;transform:scaleX(.95);">20</div>
<div style="left:0px;top:401px;width:22px;height:1px;background:#474747;"></div>
<div class="t" style="top:384.0px;line-height:20px;height:20px;font-size:12px;color:#e0e0e0;font-family:'Liberation Sans',sans-serif;left:-1.0px;width:24px;text-align:center;transform:scaleX(.95);">21</div>
<div style="left:0px;top:418px;width:22px;height:1px;background:#474747;"></div>
<div class="t" style="top:401.0px;line-height:20px;height:20px;font-size:12px;color:#e0e0e0;font-family:'Liberation Sans',sans-serif;left:-1.0px;width:24px;text-align:center;transform:scaleX(.95);">22</div>
<div style="left:0px;top:435px;width:22px;height:1px;background:#474747;"></div>
<div class="t" style="top:418.0px;line-height:20px;height:20px;font-size:12px;color:#e0e0e0;font-family:'Liberation Sans',sans-serif;left:-1.0px;width:24px;text-align:center;transform:scaleX(.95);">23</div>
<div style="left:0px;top:452px;width:22px;height:1px;background:#474747;"></div>
<div class="t" style="top:435.0px;line-height:20px;height:20px;font-size:12px;color:#e0e0e0;font-family:'Liberation Sans',sans-serif;left:-1.0px;width:24px;text-align:center;transform:scaleX(.95);">24</div>
<div style="left:0px;top:469px;width:22px;height:1px;background:#474747;"></div>
<div class="t" style="top:452.0px;line-height:20px;height:20px;font-size:12px;color:#e0e0e0;font-family:'Liberation Sans',sans-serif;left:-1.0px;width:24px;text-align:center;transform:scaleX(.95);">25</div>
<div class="t" style="top:469.0px;line-height:20px;height:20px;font-size:12px;color:#e0e0e0;font-family:'Liberation Sans',sans-serif;left:-1.0px;width:24px;text-align:center;transform:scaleX(.95);">26</div>
</div>
<div style="left:1258px;top:218px;width:22px;height:480px;background:#131512;"></div>
<svg style="position:absolute;left:1263px;top:224px;" width="12" height="8" viewBox="0 0 12 8" fill="none"><path d="M6 0.5 L11.5 7.5 H0.5 Z" fill="#8c8c8c"/></svg>
<div style="left:1265px;top:236px;width:9px;height:266px;background:#9a9a9a;border-radius:4.5px;"></div>
<svg style="position:absolute;left:1263px;top:687px;" width="12" height="8" viewBox="0 0 12 8" fill="none"><path d="M6 7.5 L11.5 0.5 H0.5 Z" fill="#8c8c8c"/></svg>
<div style="left:0px;top:698px;width:1280px;height:32px;background:#141511;"></div>
<svg style="position:absolute;left:27px;top:708px;" width="9" height="11" viewBox="0 0 9 11" fill="none"><path d="M6.6 1 L1.8 5.5 L6.6 10" stroke="#6c6c6c" stroke-width="1.3" stroke-linecap="round" stroke-linejoin="round"/></svg>
<svg style="position:absolute;left:59px;top:708px;" width="9" height="11" viewBox="0 0 9 11" fill="none"><path d="M2.4 1 L7.2 5.5 L2.4 10" stroke="#6c6c6c" stroke-width="1.3" stroke-linecap="round" stroke-linejoin="round"/></svg>
<div class="t" style="top:704.0px;line-height:20px;height:20px;font-size:13.85px;color:#fff;font-family:'Liberation Sans',sans-serif;left:125px;">Enter Info</div>
<div style="left:198px;top:705px;width:1px;height:18px;background:#5a5a5a;"></div>
<div style="left:203px;top:698px;width:150px;height:28px;background:#fbfbfb;border-radius:0 0 7px 7px;"></div>
<div class="t" style="top:701.5px;line-height:20px;height:20px;font-size:13.8px;color:#2b2b2b;font-family:'Liberation Sans',sans-serif;left:211px;">Sales Tax Form Filled</div>
<div style="left:211px;top:721px;width:133px;height:2px;background:#1e7145;border-radius:1px;"></div>
<div style="left:356px;top:705px;width:1px;height:18px;background:#5a5a5a;"></div>
<div class="t" style="top:704.0px;line-height:20px;height:20px;font-size:13.9px;color:#fff;font-family:'Liberation Sans',sans-serif;left:370px;">Query</div>
<div style="left:419px;top:705px;width:1px;height:18px;background:#5a5a5a;"></div>
<svg style="position:absolute;left:461px;top:707px;" width="13" height="13" viewBox="0 0 13 13" fill="none"><path d="M6.5 0.8 V12.2 M0.8 6.5 H12.2" stroke="#e0e0e0" stroke-width="1.2" stroke-linecap="round"/></svg>
<div style="left:769.5px;top:710px;width:2px;height:2px;background:#d8d8d8;border-radius:50%;"></div>
<div style="left:769.5px;top:714px;width:2px;height:2px;background:#d8d8d8;border-radius:50%;"></div>
<div style="left:769.5px;top:718px;width:2px;height:2px;background:#d8d8d8;border-radius:50%;"></div>
<svg style="position:absolute;left:792px;top:709px;" width="7" height="10" viewBox="0 0 7 10" fill="none"><path d="M6.5 0.5 V9.5 L0.5 5 Z" fill="#8c8c8c"/></svg>
<div style="left:804px;top:709px;width:424px;height:10px;background:#9a9a9a;border-radius:5px;"></div>
<svg style="position:absolute;left:1249px;top:709px;" width="7" height="10" viewBox="0 0 7 10" fill="none"><path d="M0.5 0.5 V9.5 L6.5 5 Z" fill="#8c8c8c"/></svg>
<div style="left:0px;top:730px;width:1280px;height:22px;background:#171917;"></div>
<div style="left:0px;top:730px;width:1280px;height:1px;background:#3a3c3a;"></div>
<div class="t" style="top:732.0px;line-height:20px;height:20px;font-size:10.8px;color:#f0f0f0;font-family:'Liberation Sans',sans-serif;left:11px;">Ready</div>
<svg style="position:absolute;left:61px;top:734px;" width="17" height="16" viewBox="0 0 17 16" fill="none"><circle cx="7.4" cy="2.4" r="1.7" stroke="#e8e8e8" stroke-width="1"/><path d="M1 5 Q7.4 7.4 13.8 5 M5.2 6.4 V9.6 L2.6 14.6 M9.6 6.4 V9 M7.4 9.6 L5.4 14.8" stroke="#e8e8e8" stroke-width="1.1" stroke-linecap="round" fill="none"/><path d="M9.6 10.4 L14.6 15.2 M14.6 10.4 L9.6 15.2" stroke="#e8e8e8" stroke-width="1.2" stroke-linecap="round"/></svg>
<div class="t" style="top:731.5px;line-height:20px;height:20px;font-size:10.55px;color:#fff;font-family:'Liberation Sans',sans-serif;font-weight:700;left:80px;">Accessibility: Investigate</div>
<svg style="position:absolute;left:862px;top:735px;" width="16" height="15" viewBox="0 0 16 15" fill="none"><path d="M6.6 10 H1.6 Q0.6 10 0.6 9 V1.6 Q0.6 0.6 1.6 0.6 H12.6 Q13.6 0.6 13.6 1.6 V4.6" stroke="#e8e8e8" stroke-width="1.1"/><circle cx="10.6" cy="10.2" r="2.1" stroke="#e8e8e8" stroke-width="1.1"/><path d="M10.6 5.8 V7.2 M10.6 13.2 V14.6 M6.2 10.2 H7.6 M13.6 10.2 H15 M7.5 7.1 L8.5 8.1 M12.7 12.3 L13.7 13.3 M13.7 7.1 L12.7 8.1 M8.5 12.3 L7.5 13.3" stroke="#e8e8e8" stroke-width="1.1"/></svg>
<div class="t" style="top:732.0px;line-height:20px;height:20px;font-size:11.45px;color:#fff;font-family:'Liberation Sans',sans-serif;left:879px;">Display Settings</div>
<div style="left:981px;top:731px;width:38px;height:21px;background:#2c2c2c;"></div>
<svg style="position:absolute;left:993px;top:735px;" width="14" height="13" viewBox="0 0 14 13" fill="none"><rect x="0.6" y="0.6" width="12.4" height="11.4" stroke="#f0f0f0" stroke-width="1.1"/><path d="M0.6 4.4 H13 M0.6 8.2 H13 M4.8 0.6 V12 M8.9 0.6 V12" stroke="#f0f0f0" stroke-width="1"/></svg>
<svg style="position:absolute;left:1033px;top:735px;" width="14" height="13" viewBox="0 0 14 13" fill="none"><rect x="0.6" y="0.6" width="12.4" height="11.4" stroke="#f0f0f0" stroke-width="1.1"/><rect x="3.4" y="3.2" width="6.8" height="6.2" stroke="#f0f0f0" stroke-width="0.9"/><path d="M4.6 5.4 H9 M4.6 7.2 H9" stroke="#f0f0f0" stroke-width="0.8"/></svg>
<svg style="position:absolute;left:1073px;top:735px;" width="14" height="13" viewBox="0 0 14 13" fill="none"><rect x="0.6" y="0.6" width="12.4" height="11.4" stroke="#f0f0f0" stroke-width="1.1"/><path d="M4.4 0.6 V6.2 H9.4 V0.6" stroke="#f0f0f0" stroke-width="1"/></svg>
<div style="left:1106px;top:741px;width:8px;height:1px;background:#e8e8e8;"></div>
<div style="left:1119px;top:741px;width:100px;height:1px;background:#8a8a8a;"></div>
<div style="left:1169px;top:738px;width:1px;height:7px;background:#8a8a8a;"></div>
<div style="left:1156px;top:735px;width:5px;height:13px;background:#b4b4b4;border-radius:1px;"></div>
<svg style="position:absolute;left:1224px;top:738px;" width="8" height="8" viewBox="0 0 8 8" fill="none"><path d="M4 0.4 V7.6 M0.4 4 H7.6" stroke="#e8e8e8" stroke-width="1.1"/></svg>
<div class="t" style="top:732.0px;line-height:20px;height:20px;font-size:11.3px;color:#f0f0f0;font-family:'Liberation Sans',sans-serif;left:1245px;">80%</div>
</body></html>
